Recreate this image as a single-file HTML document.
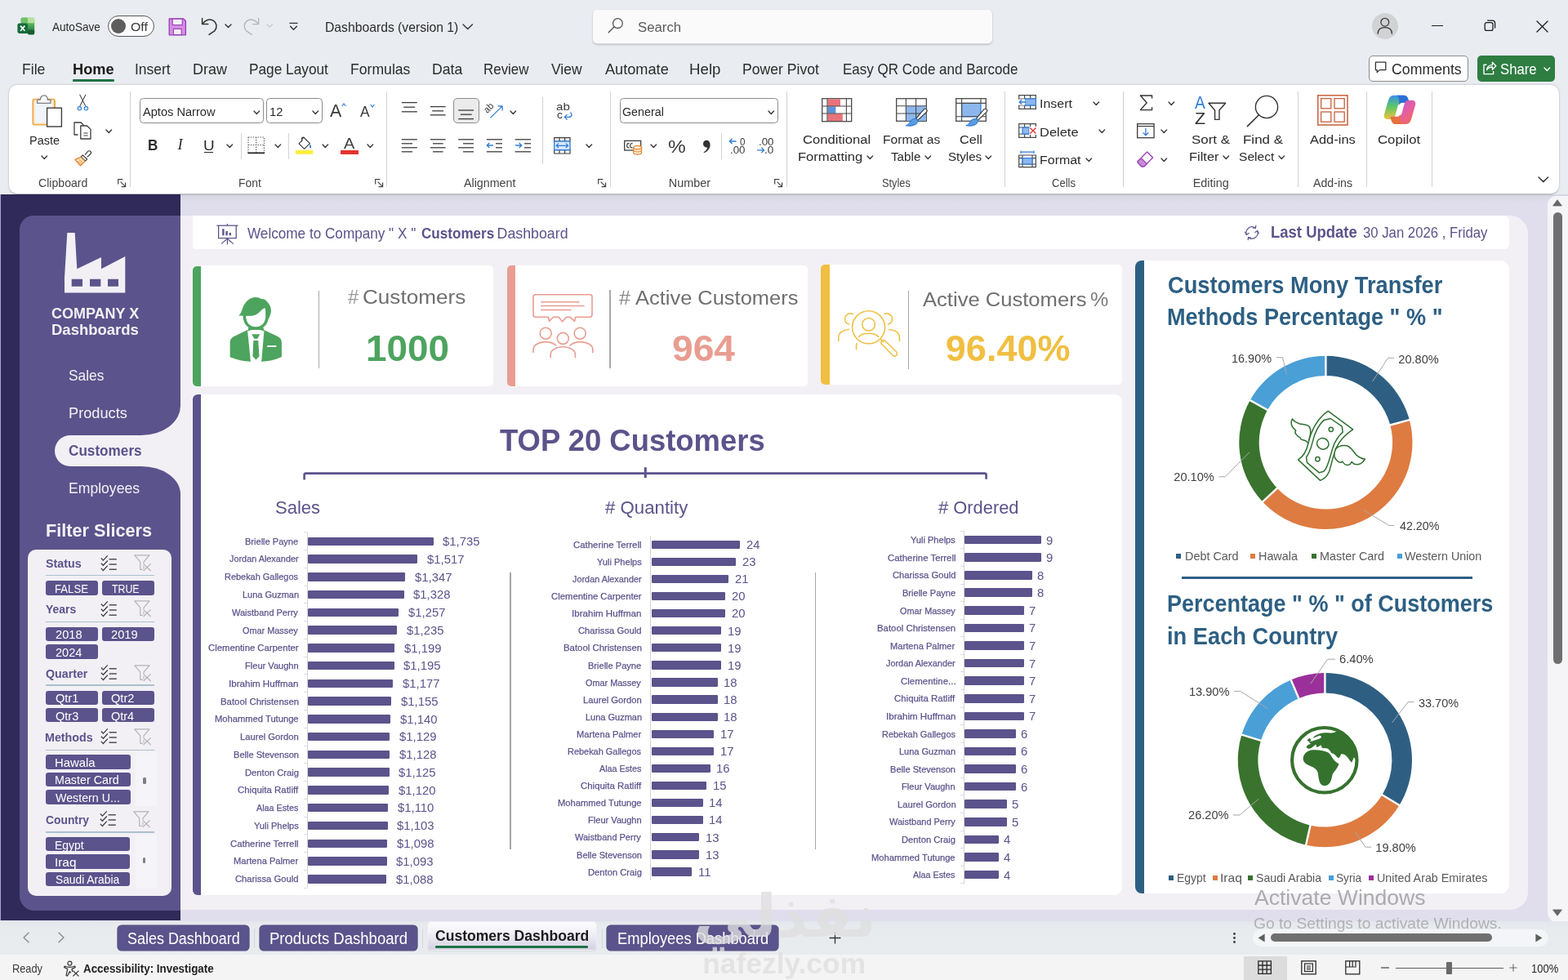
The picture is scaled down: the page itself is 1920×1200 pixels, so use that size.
<!DOCTYPE html>
<html lang="en">
<head>
<meta charset="utf-8">
<title>Dashboards (version 1) - Customers Dashboard</title>
<style>
html,body{margin:0;padding:0;overflow:hidden;}
body{width:1920px;height:1200px;overflow:hidden;background:#e9ecf1;font-family:"Liberation Sans",sans-serif;position:relative;color:#222;}
#app{will-change:transform;position:absolute;left:0;top:0;width:1920px;height:1200px;overflow:hidden;}
#app div,#app span,#app svg,#app h1,#app h2,#app h3,#app p,#app b,#app a,#app nav,#app header,#app footer,#app section,#app aside,#app main,#app button,#app ul,#app li{position:absolute;margin:0;padding:0;box-sizing:border-box;}
#app svg{overflow:visible;display:block;}
.g{left:0;top:0;width:0;height:0;}
.t{white-space:nowrap;line-height:1;font-weight:400;}
</style>
</head>
<body>
<div id="app">
<main class="g" aria-label="worksheet">
<div style="left:0px;top:238px;width:1920px;height:890px;background:#e0deec;background:linear-gradient(#d6d5e2 0,#e0deec 10px,#e0deec 100%);"></div>
<div style="left:0px;top:238px;width:220.5px;height:889px;background:#2f2a59;"></div>
<div style="left:0px;top:238px;width:1px;height:889px;background:#a9a6cf;"></div>
<div style="left:200px;top:264px;width:1671px;height:850px;background:#f2f0f5;border-radius:0 22px 22px 0;"></div>
<aside class="g" aria-label="navigation">
<div style="left:150px;top:480px;width:80px;height:140px;background:#f2f0f5;"></div>
<div style="left:24px;top:264px;width:196.5px;height:269.3px;background:#5b538b;border-radius:17px 0 48px 0 / 17px 0 36px 0;"></div>
<div style="left:24px;top:530px;width:60px;height:44px;background:#5b538b;"></div>
<div style="left:24px;top:571px;width:196.5px;height:544px;background:#5b538b;border-radius:0 48px 0 18px / 0 34px 0 18px;"></div>
<div style="left:67px;top:533.3px;width:160px;height:37.7px;background:#f2f0f5;border-radius:19px 0 0 19px;"></div>
</aside>
</main>
<nav class="g" aria-label="dashboards">
<svg style="left:79px;top:285px;" width="75" height="74" viewBox="0 0 75 74"><path d="M3.3 0 H12.7 L15.3 44.3 L45 30 V44.3 L74.3 29 V73.4 H0 V55 Z" fill="#f2f0f5"/><path d="M8.7 56.7 h13.3 v9 h-13.3z M31 56.7 h13.3 v9 h-13.3z M53 56.7 h13 v9 h-13z" fill="#5b538b"/></svg>
<span class="t" style="top:375px;font-size:18.6px;color:#f2f0f5;font-weight:700;left:62.98px;transform:scaleX(0.9670);transform-origin:0 50%;">COMPANY X</span>
<span class="t" style="top:395px;font-size:18.6px;color:#f2f0f5;font-weight:700;left:62.8px;transform:scaleX(0.9947);transform-origin:0 50%;">Dashboards</span>
<span class="t" style="top:451px;font-size:18.4px;color:#f2f0f5;left:84.22px;transform:scaleX(0.9432);transform-origin:0 50%;">Sales</span>
<span class="t" style="top:497px;font-size:18.4px;color:#f2f0f5;left:83.54px;transform:scaleX(0.9890);transform-origin:0 50%;">Products</span>
<span class="t" style="top:543px;font-size:18.4px;color:#5b538b;font-weight:700;left:84.31px;transform:scaleX(0.9327);transform-origin:0 50%;">Customers</span>
<span class="t" style="top:589px;font-size:18.4px;color:#f2f0f5;left:83.59px;transform:scaleX(0.9564);transform-origin:0 50%;">Employees</span>
</nav>
<section class="g" aria-label="filter slicers">
<h2 class="t" style="top:639px;font-size:22.2px;color:#f2f0f5;font-weight:700;left:56.29px;transform:scaleX(0.9758);transform-origin:0 50%;">Filter Slicers</h2>
<div style="left:34px;top:672.7px;width:176px;height:424.6px;background:#f2f0f5;border-radius:10px;"></div>
<span class="t" style="top:683px;font-size:14.6px;color:#5b538b;font-weight:700;left:55.87px;transform:scaleX(0.9798);transform-origin:0 50%;">Status</span>
<svg style="left:123px;top:679.6px;" width="20.4" height="18.8" viewBox="0 0 20.4 18.8"><path d="M0.8 3.5 l2.6 2.6 l5.4 -5.8" fill="none" stroke="#3d3d3d" stroke-width="1.25"/><path d="M10.6 4.8 h9.2" stroke="#3d3d3d" stroke-width="1.35"/><path d="M0.8 9.7 l2.6 2.6 l5.4 -5.8" fill="none" stroke="#3d3d3d" stroke-width="1.25"/><path d="M10.6 11 h9.2" stroke="#3d3d3d" stroke-width="1.35"/><path d="M0.8 15.9 l2.6 2.6 l5.4 -5.8" fill="none" stroke="#3d3d3d" stroke-width="1.25"/><path d="M10.6 17.2 h9.2" stroke="#3d3d3d" stroke-width="1.35"/></svg>
<svg style="left:164px;top:679px;" width="21.6" height="20.8" viewBox="0 0 21.6 20.8"><path d="M0.8 0.9 h18.2 l-6.9 8 v9.4 h-4.4 v-9.4 z" fill="none" stroke="#b4b4b4" stroke-width="1.2" stroke-linejoin="round"/><path d="M11.6 11.4 l9 8.6 M20.6 11.4 l-9 8.6" stroke="#f2f0f5" stroke-width="3.2"/><path d="M11.6 11.4 l9 8.6 M20.6 11.4 l-9 8.6" stroke="#b4b4b4" stroke-width="1.2"/></svg>
<div style="left:56px;top:703.8px;width:133.4px;height:1.7px;background:#abc0ce;"></div>
<div style="left:56.2px;top:711.3px;width:64.2px;height:17.4px;background:#5b538b;border-radius:3.2px;"></div>
<span class="t" style="top:713px;font-size:15px;color:#fff;left:67.25px;transform:scaleX(0.8785);transform-origin:0 50%;">FALSE</span>
<div style="left:125px;top:711.3px;width:64.2px;height:17.4px;background:#5b538b;border-radius:3.2px;"></div>
<span class="t" style="top:713px;font-size:15px;color:#fff;left:136.85px;transform:scaleX(0.8221);transform-origin:0 50%;">TRUE</span>
<span class="t" style="top:739px;font-size:14.6px;color:#5b538b;font-weight:700;left:56.02px;transform:scaleX(0.9552);transform-origin:0 50%;">Years</span>
<svg style="left:123px;top:735.9px;" width="20.4" height="18.8" viewBox="0 0 20.4 18.8"><path d="M0.8 3.5 l2.6 2.6 l5.4 -5.8" fill="none" stroke="#3d3d3d" stroke-width="1.25"/><path d="M10.6 4.8 h9.2" stroke="#3d3d3d" stroke-width="1.35"/><path d="M0.8 9.7 l2.6 2.6 l5.4 -5.8" fill="none" stroke="#3d3d3d" stroke-width="1.25"/><path d="M10.6 11 h9.2" stroke="#3d3d3d" stroke-width="1.35"/><path d="M0.8 15.9 l2.6 2.6 l5.4 -5.8" fill="none" stroke="#3d3d3d" stroke-width="1.25"/><path d="M10.6 17.2 h9.2" stroke="#3d3d3d" stroke-width="1.35"/></svg>
<svg style="left:164px;top:735.3px;" width="21.6" height="20.8" viewBox="0 0 21.6 20.8"><path d="M0.8 0.9 h18.2 l-6.9 8 v9.4 h-4.4 v-9.4 z" fill="none" stroke="#b4b4b4" stroke-width="1.2" stroke-linejoin="round"/><path d="M11.6 11.4 l9 8.6 M20.6 11.4 l-9 8.6" stroke="#f2f0f5" stroke-width="3.2"/><path d="M11.6 11.4 l9 8.6 M20.6 11.4 l-9 8.6" stroke="#b4b4b4" stroke-width="1.2"/></svg>
<div style="left:56px;top:760.7px;width:133.4px;height:1.7px;background:#abc0ce;"></div>
<div style="left:56.2px;top:767.6px;width:64.2px;height:17.4px;background:#5b538b;border-radius:3.2px;"></div>
<span class="t" style="top:769px;font-size:15px;color:#fff;left:67.57px;transform:scaleX(0.9774);transform-origin:0 50%;">2018</span>
<div style="left:125px;top:767.6px;width:64.2px;height:17.4px;background:#5b538b;border-radius:3.2px;"></div>
<span class="t" style="top:769px;font-size:15px;color:#fff;left:136.37px;transform:scaleX(0.9797);transform-origin:0 50%;">2019</span>
<div style="left:56.2px;top:789.2px;width:64.2px;height:17.4px;background:#5b538b;border-radius:3.2px;"></div>
<span class="t" style="top:791px;font-size:15px;color:#fff;left:67.57px;transform:scaleX(0.9728);transform-origin:0 50%;">2024</span>
<span class="t" style="top:818px;font-size:14.6px;color:#5b538b;font-weight:700;left:55.73px;transform:scaleX(0.9735);transform-origin:0 50%;">Quarter</span>
<svg style="left:123px;top:814.2px;" width="20.4" height="18.8" viewBox="0 0 20.4 18.8"><path d="M0.8 3.5 l2.6 2.6 l5.4 -5.8" fill="none" stroke="#3d3d3d" stroke-width="1.25"/><path d="M10.6 4.8 h9.2" stroke="#3d3d3d" stroke-width="1.35"/><path d="M0.8 9.7 l2.6 2.6 l5.4 -5.8" fill="none" stroke="#3d3d3d" stroke-width="1.25"/><path d="M10.6 11 h9.2" stroke="#3d3d3d" stroke-width="1.35"/><path d="M0.8 15.9 l2.6 2.6 l5.4 -5.8" fill="none" stroke="#3d3d3d" stroke-width="1.25"/><path d="M10.6 17.2 h9.2" stroke="#3d3d3d" stroke-width="1.35"/></svg>
<svg style="left:164px;top:813.6px;" width="21.6" height="20.8" viewBox="0 0 21.6 20.8"><path d="M0.8 0.9 h18.2 l-6.9 8 v9.4 h-4.4 v-9.4 z" fill="none" stroke="#b4b4b4" stroke-width="1.2" stroke-linejoin="round"/><path d="M11.6 11.4 l9 8.6 M20.6 11.4 l-9 8.6" stroke="#f2f0f5" stroke-width="3.2"/><path d="M11.6 11.4 l9 8.6 M20.6 11.4 l-9 8.6" stroke="#b4b4b4" stroke-width="1.2"/></svg>
<div style="left:56px;top:838.4px;width:133.4px;height:1.7px;background:#abc0ce;"></div>
<div style="left:56.2px;top:845.9px;width:64.2px;height:17.4px;background:#5b538b;border-radius:3.2px;"></div>
<span class="t" style="top:847px;font-size:15px;color:#fff;left:67.65px;transform:scaleX(0.9704);transform-origin:0 50%;">Qtr1</span>
<div style="left:125px;top:845.9px;width:64.2px;height:17.4px;background:#5b538b;border-radius:3.2px;"></div>
<span class="t" style="top:847px;font-size:15px;color:#fff;left:136.44px;transform:scaleX(0.9730);transform-origin:0 50%;">Qtr2</span>
<div style="left:56.2px;top:867.1px;width:64.2px;height:17.4px;background:#5b538b;border-radius:3.2px;"></div>
<span class="t" style="top:869px;font-size:15px;color:#fff;left:67.65px;transform:scaleX(0.9677);transform-origin:0 50%;">Qtr3</span>
<div style="left:125px;top:867.1px;width:64.2px;height:17.4px;background:#5b538b;border-radius:3.2px;"></div>
<span class="t" style="top:869px;font-size:15px;color:#fff;left:136.45px;transform:scaleX(0.9626);transform-origin:0 50%;">Qtr4</span>
<span class="t" style="top:896px;font-size:14.6px;color:#5b538b;font-weight:700;left:55.37px;transform:scaleX(0.9782);transform-origin:0 50%;">Methods</span>
<svg style="left:123px;top:892.3px;" width="20.4" height="18.8" viewBox="0 0 20.4 18.8"><path d="M0.8 3.5 l2.6 2.6 l5.4 -5.8" fill="none" stroke="#3d3d3d" stroke-width="1.25"/><path d="M10.6 4.8 h9.2" stroke="#3d3d3d" stroke-width="1.35"/><path d="M0.8 9.7 l2.6 2.6 l5.4 -5.8" fill="none" stroke="#3d3d3d" stroke-width="1.25"/><path d="M10.6 11 h9.2" stroke="#3d3d3d" stroke-width="1.35"/><path d="M0.8 15.9 l2.6 2.6 l5.4 -5.8" fill="none" stroke="#3d3d3d" stroke-width="1.25"/><path d="M10.6 17.2 h9.2" stroke="#3d3d3d" stroke-width="1.35"/></svg>
<svg style="left:164px;top:891.7px;" width="21.6" height="20.8" viewBox="0 0 21.6 20.8"><path d="M0.8 0.9 h18.2 l-6.9 8 v9.4 h-4.4 v-9.4 z" fill="none" stroke="#b4b4b4" stroke-width="1.2" stroke-linejoin="round"/><path d="M11.6 11.4 l9 8.6 M20.6 11.4 l-9 8.6" stroke="#f2f0f5" stroke-width="3.2"/><path d="M11.6 11.4 l9 8.6 M20.6 11.4 l-9 8.6" stroke="#b4b4b4" stroke-width="1.2"/></svg>
<div style="left:56px;top:917.7px;width:133.4px;height:1.7px;background:#abc0ce;"></div>
<div style="left:56.2px;top:924.4px;width:103.8px;height:17.4px;background:#5b538b;border-radius:3.2px;"></div>
<span class="t" style="top:926px;font-size:15px;color:#fff;left:67.11px;transform:scaleX(0.9913);transform-origin:0 50%;">Hawala</span>
<div style="left:56.2px;top:945.9px;width:103.8px;height:17.4px;background:#5b538b;border-radius:3.2px;"></div>
<span class="t" style="top:947px;font-size:15px;color:#fff;left:67.16px;transform:scaleX(0.9524);transform-origin:0 50%;">Master Card</span>
<div style="left:56.2px;top:967.3px;width:103.8px;height:17.4px;background:#5b538b;border-radius:3.2px;"></div>
<span class="t" style="top:969px;font-size:15px;color:#fff;left:68.23px;transform:scaleX(0.9498);transform-origin:0 50%;">Western U...</span>
<span class="t" style="top:997px;font-size:14.6px;color:#5b538b;font-weight:700;left:55.75px;transform:scaleX(0.9482);transform-origin:0 50%;">Country</span>
<svg style="left:122.2px;top:993.4px;" width="20.4" height="18.8" viewBox="0 0 20.4 18.8"><path d="M0.8 3.5 l2.6 2.6 l5.4 -5.8" fill="none" stroke="#3d3d3d" stroke-width="1.25"/><path d="M10.6 4.8 h9.2" stroke="#3d3d3d" stroke-width="1.35"/><path d="M0.8 9.7 l2.6 2.6 l5.4 -5.8" fill="none" stroke="#3d3d3d" stroke-width="1.25"/><path d="M10.6 11 h9.2" stroke="#3d3d3d" stroke-width="1.35"/><path d="M0.8 15.9 l2.6 2.6 l5.4 -5.8" fill="none" stroke="#3d3d3d" stroke-width="1.25"/><path d="M10.6 17.2 h9.2" stroke="#3d3d3d" stroke-width="1.35"/></svg>
<svg style="left:163.2px;top:992.8px;" width="21.6" height="20.8" viewBox="0 0 21.6 20.8"><path d="M0.8 0.9 h18.2 l-6.9 8 v9.4 h-4.4 v-9.4 z" fill="none" stroke="#b4b4b4" stroke-width="1.2" stroke-linejoin="round"/><path d="M11.6 11.4 l9 8.6 M20.6 11.4 l-9 8.6" stroke="#f2f0f5" stroke-width="3.2"/><path d="M11.6 11.4 l9 8.6 M20.6 11.4 l-9 8.6" stroke="#b4b4b4" stroke-width="1.2"/></svg>
<div style="left:56px;top:1018px;width:133.4px;height:1.7px;background:#abc0ce;"></div>
<div style="left:56.2px;top:1025px;width:103.2px;height:17.4px;background:#5b538b;border-radius:3.2px;"></div>
<span class="t" style="top:1027px;font-size:15px;color:#fff;left:67.19px;transform:scaleX(0.9285);transform-origin:0 50%;">Egypt</span>
<div style="left:56.2px;top:1046.3px;width:103.2px;height:17.4px;background:#5b538b;border-radius:3.2px;"></div>
<span class="t" style="top:1048px;font-size:15px;color:#fff;left:66.92px;transform:scaleX(1.0224);transform-origin:0 50%;">Iraq</span>
<div style="left:56.2px;top:1067.6px;width:103.2px;height:17.4px;background:#5b538b;border-radius:3.2px;"></div>
<span class="t" style="top:1069px;font-size:15px;color:#fff;left:67.68px;transform:scaleX(0.9185);transform-origin:0 50%;">Saudi Arabia</span>
<div style="left:165.6px;top:921px;width:26px;height:66px;background:#f5f4f8;"></div>
<div style="left:165.6px;top:1022px;width:26px;height:66px;background:#f5f4f8;"></div>
<div style="left:175.4px;top:951.9px;width:3.8px;height:8.4px;background:#7f7f7f;border-radius:1.5px;"></div>
<div style="left:174.6px;top:1049.8px;width:3.8px;height:7.4px;background:#7f7f7f;border-radius:1.5px;"></div>
</section>
<header class="g" aria-label="dashboard header">
<div style="left:235.8px;top:264px;width:1612px;height:40.5px;background:#fff;border-radius:2px 6px 6px 3px;"></div>
<svg style="left:265px;top:273.5px;" width="27" height="26.5" viewBox="0 0 27 26.5"><path d="M0.3 2.2 H26.5" stroke="#5b538b" stroke-width="1.3" fill="none"/><path d="M13.4 0 V2.2 M2.6 2.4 V17.6 H24.2 V2.4" stroke="#5b538b" stroke-width="1.3" fill="none"/><path d="M7.2 6.2 h2.4 v8 h-2.4z M11.4 9 h2.4 v5.2 h-2.4z M15.6 11 h2.4 v3.2 h-2.4z" fill="#5b538b"/><path d="M13.4 17.6 V25.4 M13.4 18.2 L6 24.6 M13.4 18.2 L20.8 24.6" stroke="#5b538b" stroke-width="1.2" fill="none"/></svg>
<span class="t" style="top:278px;font-size:17.8px;color:#5b538b;left:302.91px;transform:scaleX(0.9642);transform-origin:0 50%;">Welcome to Company " X "</span>
<span class="t" style="top:278px;font-size:17.8px;color:#5b538b;font-weight:700;left:516.32px;transform:scaleX(0.9609);transform-origin:0 50%;">Customers</span>
<span class="t" style="top:278px;font-size:17.8px;color:#5b538b;left:608.58px;">Dashboard</span>
<svg style="left:1523px;top:274.5px;" width="20" height="20" viewBox="0 0 20 20"><path d="M3.3 12.2 A7.2 7.2 0 0 1 14.2 4" fill="none" stroke="#5b538b" stroke-width="1.2"/><path d="M16.7 7.8 A7.2 7.2 0 0 1 5.8 16" fill="none" stroke="#5b538b" stroke-width="1.2"/><path d="M14.9 0.8 L14.4 4.3 L10.9 3.8 M5.1 19.2 L5.6 15.7 L9.1 16.2" fill="none" stroke="#5b538b" stroke-width="1.2"/><path d="M1.3 8.8 L3.3 12.4 L6.6 10.2 M18.7 11.2 L16.7 7.6 L13.4 9.8" fill="none" stroke="#5b538b" stroke-width="1.1"/></svg>
<span class="t" style="top:275px;font-size:19.6px;color:#5b538b;font-weight:700;left:1555.6px;transform:scaleX(0.9432);transform-origin:0 50%;">Last Update</span>
<span class="t" style="top:277px;font-size:17.8px;color:#5b538b;left:1668.63px;transform:scaleX(0.9404);transform-origin:0 50%;">30 Jan 2026 , Friday</span>
</header>
<section class="g" aria-label="kpi cards">
<div style="left:236px;top:325.4px;width:368.3px;height:147.8px;background:#fff;border-radius:5px;"></div>
<div style="left:235.8px;top:325.6px;width:10px;height:147.2px;background:#4da45e;border-radius:5px 0 0 5px;"></div>
<svg style="left:260px;top:350px;" width="120" height="110" viewBox="0 0 1309 1200"><path d="M470 588 L300 672 C255 694 236 716 236 760 V952 C330 992 420 1008 512 1012 L655 1012 C748 1008 838 992 926 950 V760 C926 716 906 694 862 672 L690 588 Z" fill="#4da45e"/><path d="M470 600 L512 1014 H656 L692 600 L640 580 H520 Z" fill="#fff"/><path d="M526 645 H636 L602 706 H560 Z" fill="#4da45e"/><path d="M549 730 H613 L627 940 L583 986 L539 940 Z" fill="#4da45e"/><path d="M742 806 H846" stroke="#fff" stroke-width="22" stroke-linecap="round"/><path d="M410 400 C410 520 490 584 580 584 C670 584 752 520 752 400 L752 330 L410 330 Z" fill="#4da45e"/><path d="M478 560 H686 V612 H478 Z" fill="#4da45e"/><path d="M524 590 H640 L690 606 L640 626 H524 L470 606 Z" fill="#fff"/><path d="M448 398 C448 500 510 548 580 548 C650 548 713 500 713 398 C713 350 712 320 706 296 C670 300 640 340 600 372 C570 396 520 402 448 398 Z" fill="#fff"/><path d="M350 398 C380 380 388 340 404 300 C436 210 500 152 580 152 C610 152 634 160 652 178 C676 170 706 184 728 206 C770 248 790 300 784 346 C780 380 764 420 750 440 L714 440 C716 400 716 340 706 296 C670 300 644 338 604 370 C570 398 520 404 448 400 Z" fill="#4da45e"/></svg>
<div style="left:389.6px;top:356.2px;width:1.8px;height:95px;background:#a9a9a9;"></div>
<span class="t" style="top:352px;font-size:24px;color:#9a9a9a;left:426.18px;transform:scaleX(0.9939);transform-origin:0 50%;">#</span>
<span class="t" style="top:352px;font-size:24px;color:#6f6f6f;left:444.29px;transform:scaleX(1.0877);transform-origin:0 50%;">Customers</span>
<span class="t" style="top:404px;font-size:45px;color:#4da45e;font-weight:700;left:448.05px;transform:scaleX(1.0196);transform-origin:0 50%;">1000</span>
<div style="left:621px;top:325.2px;width:367.6px;height:147.8px;background:#fff;border-radius:5px;"></div>
<div style="left:620.8px;top:325.4px;width:10px;height:147.6px;background:#e99d91;border-radius:5px 0 0 5px;"></div>
<svg style="left:652px;top:360px;" width="75.5" height="79" viewBox="0 0 75.5 79"><g fill="none" stroke="#e99d91" stroke-width="1.6" stroke-linejoin="round" stroke-linecap="round"><path d="M3.6 0.7 H70.4 A2.6 2.6 0 0 1 73 3.3 V25.6 A2.6 2.6 0 0 1 70.4 28.2 H52.6 L51.6 33.4 L46 28.2 H41.6 L36.6 33.8 L32 28.2 H25.6 L20.4 33.4 L19.6 28.2 H3.6 A2.6 2.6 0 0 1 1 25.6 V3.3 A2.6 2.6 0 0 1 3.6 0.7 Z"/><path d="M10.6 9.7 H57 M10.6 14.5 H63 M10.6 19.5 H47"/><circle cx="16.2" cy="48.2" r="7"/><circle cx="58.2" cy="48.2" r="7"/><circle cx="37.3" cy="54.4" r="7"/><path d="M1 71.6 V68 C1 62.6 8 58.6 15.6 58.6 C21 58.6 25.6 60.2 28.8 62.8"/><path d="M73.8 71.6 V68 C73.8 62.6 66.8 58.6 59.2 58.6 C53.8 58.6 49.2 60.2 46 62.8"/><path d="M22.2 77.8 V74.2 C22.2 68.6 29 64.8 37.3 64.8 C45.6 64.8 52.4 68.6 52.4 74.2 V77.8"/></g></svg>
<div style="left:746.2px;top:355.2px;width:1.8px;height:96px;background:#a9a9a9;"></div>
<span class="t" style="top:353px;font-size:24.6px;color:#8a8a8a;left:758.18px;transform:scaleX(1.0144);transform-origin:0 50%;">#</span>
<span class="t" style="top:353px;font-size:24.6px;color:#6f6f6f;left:777.5px;transform:scaleX(1.0345);transform-origin:0 50%;">Active Customers</span>
<span class="t" style="top:404px;font-size:45px;color:#e99d91;font-weight:700;left:822.98px;transform:scaleX(1.0256);transform-origin:0 50%;">964</span>
<div style="left:1005.4px;top:324.2px;width:368.4px;height:147px;background:#fff;border-radius:5px;"></div>
<div style="left:1005.2px;top:324.2px;width:10.8px;height:146.8px;background:#f0bf42;border-radius:5px 0 0 5px;"></div>
<svg style="left:1026px;top:379.6px;" width="76.5" height="57" viewBox="0 0 76.5 57"><g fill="none" stroke="#f0bf42" stroke-width="1.55" stroke-linecap="round" stroke-linejoin="round"><circle cx="37.6" cy="20.8" r="20"/><circle cx="37.6" cy="17.2" r="7.8"/><path d="M25.4 32.4 C27.6 29.6 32 28.2 37.6 28.2 C43.2 28.2 47.6 29.6 49.8 32.4"/><path d="M52.6 35.4 L55.4 38.2 M57.2 36.8 L71.6 50.8 A3.1 3.1 0 0 1 67.2 55.2 L53.2 40.8 A3 3 0 0 1 57.2 36.8 Z"/><path d="M18.2 4.2 C14 2.6 8.6 5.4 8.6 10.4 C8.6 13.6 10.8 16.2 13.6 17"/><path d="M57 4.2 C61.2 2.6 66.6 5.4 66.6 10.4 C66.6 13.6 64.4 16.2 61.6 17"/><path d="M0.8 37.4 V32.6 C0.8 27.6 6 23.8 13.4 23.4"/><path d="M75.4 37.4 V32.6 C75.4 27.6 70.2 23.8 62.8 23.4"/><path d="M23 40.6 C22.4 42.6 22.4 45 22.6 47.8"/></g></svg>
<div style="left:1111.6px;top:356px;width:1.8px;height:96px;background:#a9a9a9;"></div>
<span class="t" style="top:355px;font-size:24.4px;color:#6f6f6f;left:1130.2px;transform:scaleX(1.0488);transform-origin:0 50%;">Active Customers</span>
<span class="t" style="top:355px;font-size:24.4px;color:#7a7a7a;left:1334.72px;transform:scaleX(1.0296);transform-origin:0 50%;">%</span>
<span class="t" style="top:404px;font-size:45px;color:#f0bf42;font-weight:700;left:1157.83px;">96.40%</span>
</section>
<section class="g" aria-label="top 20 customers">
<div style="left:236px;top:483.4px;width:1138px;height:613px;background:#fff;border-radius:6px 9px 9px 6px;"></div>
<div style="left:235.6px;top:483px;width:10.2px;height:613.4px;background:#5b538b;border-radius:6px 0 0 6px;"></div>
<h1 class="t" style="top:521px;font-size:37.6px;color:#5b538b;font-weight:700;left:612.14px;transform:scaleX(0.9696);transform-origin:0 50%;">TOP 20 Customers</h1>
<svg style="left:370px;top:570px;" width="842" height="20" viewBox="0 0 842 20"><path d="M2.6 17.6 V11.4 Q2.6 9.6 4.4 9.6 H835.6 Q837.6 9.6 837.6 11.4 V16.8" fill="none" stroke="#5b538b" stroke-width="2.6"/><path d="M420.3 2.2 V15.2" stroke="#5b538b" stroke-width="3"/></svg>
</section>
<section class="g" aria-label="Sales">
<h3 class="t" style="top:611px;font-size:22.4px;color:#5b538b;left:337.01px;transform:scaleX(0.9823);transform-origin:0 50%;">Sales</h3>
<div style="left:375.9px;top:651.87px;width:1px;height:435.32px;background:#d4d4d4;"></div>
<div style="left:372.4px;top:651.37px;width:4px;height:1px;background:#dcdcdc;"></div>
<div style="left:372.4px;top:673.13px;width:4px;height:1px;background:#dcdcdc;"></div>
<div style="left:372.4px;top:694.9px;width:4px;height:1px;background:#dcdcdc;"></div>
<div style="left:372.4px;top:716.66px;width:4px;height:1px;background:#dcdcdc;"></div>
<div style="left:372.4px;top:738.43px;width:4px;height:1px;background:#dcdcdc;"></div>
<div style="left:372.4px;top:760.2px;width:4px;height:1px;background:#dcdcdc;"></div>
<div style="left:372.4px;top:781.96px;width:4px;height:1px;background:#dcdcdc;"></div>
<div style="left:372.4px;top:803.73px;width:4px;height:1px;background:#dcdcdc;"></div>
<div style="left:372.4px;top:825.49px;width:4px;height:1px;background:#dcdcdc;"></div>
<div style="left:372.4px;top:847.26px;width:4px;height:1px;background:#dcdcdc;"></div>
<div style="left:372.4px;top:869.03px;width:4px;height:1px;background:#dcdcdc;"></div>
<div style="left:372.4px;top:890.79px;width:4px;height:1px;background:#dcdcdc;"></div>
<div style="left:372.4px;top:912.56px;width:4px;height:1px;background:#dcdcdc;"></div>
<div style="left:372.4px;top:934.32px;width:4px;height:1px;background:#dcdcdc;"></div>
<div style="left:372.4px;top:956.09px;width:4px;height:1px;background:#dcdcdc;"></div>
<div style="left:372.4px;top:977.86px;width:4px;height:1px;background:#dcdcdc;"></div>
<div style="left:372.4px;top:999.62px;width:4px;height:1px;background:#dcdcdc;"></div>
<div style="left:372.4px;top:1021.39px;width:4px;height:1px;background:#dcdcdc;"></div>
<div style="left:372.4px;top:1043.15px;width:4px;height:1px;background:#dcdcdc;"></div>
<div style="left:372.4px;top:1064.92px;width:4px;height:1px;background:#dcdcdc;"></div>
<div style="left:372.4px;top:1086.69px;width:4px;height:1px;background:#dcdcdc;"></div>
<div style="left:377.4px;top:657.5px;width:153.2px;height:10.5px;background:#5b538b;border-radius:1.2px;"></div>
<span class="t" style="top:658px;font-size:11.8px;color:#5b538b;left:300.37px;transform:scaleX(0.9371);transform-origin:0 50%;-webkit-text-stroke:0.25px #5b538b;">Brielle Payne</span>
<span class="t" style="top:656px;font-size:14.6px;color:#5b538b;left:542.15px;transform:scaleX(1.0171);transform-origin:0 50%;">$1,735</span>
<div style="left:377.4px;top:679.27px;width:133.95px;height:10.5px;background:#5b538b;border-radius:1.2px;"></div>
<span class="t" style="top:679px;font-size:11.8px;color:#5b538b;left:280.59px;transform:scaleX(0.9213);transform-origin:0 50%;-webkit-text-stroke:0.25px #5b538b;">Jordan Alexander</span>
<span class="t" style="top:678px;font-size:14.6px;color:#5b538b;left:522.9px;transform:scaleX(1.0171);transform-origin:0 50%;">$1,517</span>
<div style="left:377.4px;top:701.03px;width:118.94px;height:10.5px;background:#5b538b;border-radius:1.2px;"></div>
<span class="t" style="top:701px;font-size:11.8px;color:#5b538b;left:275.38px;transform:scaleX(0.9268);transform-origin:0 50%;-webkit-text-stroke:0.25px #5b538b;">Rebekah Gallegos</span>
<span class="t" style="top:700px;font-size:14.6px;color:#5b538b;left:507.89px;transform:scaleX(1.0171);transform-origin:0 50%;">$1,347</span>
<div style="left:377.4px;top:722.8px;width:117.26px;height:10.5px;background:#5b538b;border-radius:1.2px;"></div>
<span class="t" style="top:723px;font-size:11.8px;color:#5b538b;left:296.62px;transform:scaleX(0.9324);transform-origin:0 50%;-webkit-text-stroke:0.25px #5b538b;">Luna Guzman</span>
<span class="t" style="top:721px;font-size:14.6px;color:#5b538b;left:506.21px;transform:scaleX(1.0171);transform-origin:0 50%;">$1,328</span>
<div style="left:377.4px;top:744.56px;width:110.99px;height:10.5px;background:#5b538b;border-radius:1.2px;"></div>
<span class="t" style="top:745px;font-size:11.8px;color:#5b538b;left:284.2px;transform:scaleX(0.9311);transform-origin:0 50%;-webkit-text-stroke:0.25px #5b538b;">Waistband Perry</span>
<span class="t" style="top:743px;font-size:14.6px;color:#5b538b;left:499.94px;transform:scaleX(1.0171);transform-origin:0 50%;">$1,257</span>
<div style="left:377.4px;top:766.33px;width:109.05px;height:10.5px;background:#5b538b;border-radius:1.2px;"></div>
<span class="t" style="top:767px;font-size:11.8px;color:#5b538b;left:297.31px;transform:scaleX(0.9215);transform-origin:0 50%;-webkit-text-stroke:0.25px #5b538b;">Omar Massey</span>
<span class="t" style="top:765px;font-size:14.6px;color:#5b538b;left:498px;transform:scaleX(1.0171);transform-origin:0 50%;">$1,235</span>
<div style="left:377.4px;top:788.1px;width:105.87px;height:10.5px;background:#5b538b;border-radius:1.2px;"></div>
<span class="t" style="top:788px;font-size:11.8px;color:#5b538b;left:254.53px;transform:scaleX(0.9587);transform-origin:0 50%;-webkit-text-stroke:0.25px #5b538b;">Clementine Carpenter</span>
<span class="t" style="top:787px;font-size:14.6px;color:#5b538b;left:494.82px;transform:scaleX(1.0171);transform-origin:0 50%;">$1,199</span>
<div style="left:377.4px;top:809.86px;width:105.52px;height:10.5px;background:#5b538b;border-radius:1.2px;"></div>
<span class="t" style="top:810px;font-size:11.8px;color:#5b538b;left:300.01px;transform:scaleX(0.9390);transform-origin:0 50%;-webkit-text-stroke:0.25px #5b538b;">Fleur Vaughn</span>
<span class="t" style="top:808px;font-size:14.6px;color:#5b538b;left:494.47px;transform:scaleX(1.0171);transform-origin:0 50%;">$1,195</span>
<div style="left:377.4px;top:831.63px;width:103.93px;height:10.5px;background:#5b538b;border-radius:1.2px;"></div>
<span class="t" style="top:832px;font-size:11.8px;color:#5b538b;left:280.26px;transform:scaleX(0.9824);transform-origin:0 50%;-webkit-text-stroke:0.25px #5b538b;">Ibrahim Huffman</span>
<span class="t" style="top:830px;font-size:14.6px;color:#5b538b;left:492.88px;transform:scaleX(1.0171);transform-origin:0 50%;">$1,177</span>
<div style="left:377.4px;top:853.39px;width:101.99px;height:10.5px;background:#5b538b;border-radius:1.2px;"></div>
<span class="t" style="top:854px;font-size:11.8px;color:#5b538b;left:269.59px;transform:scaleX(0.9643);transform-origin:0 50%;-webkit-text-stroke:0.25px #5b538b;">Batool Christensen</span>
<span class="t" style="top:852px;font-size:14.6px;color:#5b538b;left:490.94px;transform:scaleX(1.0171);transform-origin:0 50%;">$1,155</span>
<div style="left:377.4px;top:875.16px;width:100.66px;height:10.5px;background:#5b538b;border-radius:1.2px;"></div>
<span class="t" style="top:875px;font-size:11.8px;color:#5b538b;left:262.9px;transform:scaleX(0.9482);transform-origin:0 50%;-webkit-text-stroke:0.25px #5b538b;">Mohammed Tutunge</span>
<span class="t" style="top:874px;font-size:14.6px;color:#5b538b;left:489.61px;transform:scaleX(1.0171);transform-origin:0 50%;">$1,140</span>
<div style="left:377.4px;top:896.93px;width:99.69px;height:10.5px;background:#5b538b;border-radius:1.2px;"></div>
<span class="t" style="top:897px;font-size:11.8px;color:#5b538b;left:294.1px;transform:scaleX(0.9499);transform-origin:0 50%;-webkit-text-stroke:0.25px #5b538b;">Laurel Gordon</span>
<span class="t" style="top:895px;font-size:14.6px;color:#5b538b;left:488.64px;transform:scaleX(1.0171);transform-origin:0 50%;">$1,129</span>
<div style="left:377.4px;top:918.69px;width:99.6px;height:10.5px;background:#5b538b;border-radius:1.2px;"></div>
<span class="t" style="top:919px;font-size:11.8px;color:#5b538b;left:285.71px;transform:scaleX(0.9384);transform-origin:0 50%;-webkit-text-stroke:0.25px #5b538b;">Belle Stevenson</span>
<span class="t" style="top:917px;font-size:14.6px;color:#5b538b;left:488.55px;transform:scaleX(1.0171);transform-origin:0 50%;">$1,128</span>
<div style="left:377.4px;top:940.46px;width:99.34px;height:10.5px;background:#5b538b;border-radius:1.2px;"></div>
<span class="t" style="top:941px;font-size:11.8px;color:#5b538b;left:299.7px;transform:scaleX(0.9500);transform-origin:0 50%;-webkit-text-stroke:0.25px #5b538b;">Denton Craig</span>
<span class="t" style="top:939px;font-size:14.6px;color:#5b538b;left:488.29px;transform:scaleX(1.0171);transform-origin:0 50%;">$1,125</span>
<div style="left:377.4px;top:962.22px;width:98.9px;height:10.5px;background:#5b538b;border-radius:1.2px;"></div>
<span class="t" style="top:962px;font-size:11.8px;color:#5b538b;left:290.93px;transform:scaleX(0.9680);transform-origin:0 50%;-webkit-text-stroke:0.25px #5b538b;">Chiquita Ratliff</span>
<span class="t" style="top:961px;font-size:14.6px;color:#5b538b;left:487.85px;transform:scaleX(1.0171);transform-origin:0 50%;">$1,120</span>
<div style="left:377.4px;top:983.99px;width:98.01px;height:10.5px;background:#5b538b;border-radius:1.2px;"></div>
<span class="t" style="top:984px;font-size:11.8px;color:#5b538b;left:314px;transform:scaleX(0.9109);transform-origin:0 50%;-webkit-text-stroke:0.25px #5b538b;">Alaa Estes</span>
<span class="t" style="top:982px;font-size:14.6px;color:#5b538b;left:486.96px;transform:scaleX(1.0171);transform-origin:0 50%;">$1,110</span>
<div style="left:377.4px;top:1005.76px;width:97.39px;height:10.5px;background:#5b538b;border-radius:1.2px;"></div>
<span class="t" style="top:1006px;font-size:11.8px;color:#5b538b;left:310.52px;transform:scaleX(0.9393);transform-origin:0 50%;-webkit-text-stroke:0.25px #5b538b;">Yuli Phelps</span>
<span class="t" style="top:1004px;font-size:14.6px;color:#5b538b;left:486.35px;transform:scaleX(1.0171);transform-origin:0 50%;">$1,103</span>
<div style="left:377.4px;top:1027.52px;width:96.95px;height:10.5px;background:#5b538b;border-radius:1.2px;"></div>
<span class="t" style="top:1028px;font-size:11.8px;color:#5b538b;left:282.23px;transform:scaleX(0.9675);transform-origin:0 50%;-webkit-text-stroke:0.25px #5b538b;">Catherine Terrell</span>
<span class="t" style="top:1026px;font-size:14.6px;color:#5b538b;left:485.9px;transform:scaleX(1.0171);transform-origin:0 50%;">$1,098</span>
<div style="left:377.4px;top:1049.29px;width:96.51px;height:10.5px;background:#5b538b;border-radius:1.2px;"></div>
<span class="t" style="top:1049px;font-size:11.8px;color:#5b538b;left:286.01px;transform:scaleX(0.9435);transform-origin:0 50%;-webkit-text-stroke:0.25px #5b538b;">Martena Palmer</span>
<span class="t" style="top:1048px;font-size:14.6px;color:#5b538b;left:485.46px;transform:scaleX(1.0171);transform-origin:0 50%;">$1,093</span>
<div style="left:377.4px;top:1071.05px;width:96.07px;height:10.5px;background:#5b538b;border-radius:1.2px;"></div>
<span class="t" style="top:1071px;font-size:11.8px;color:#5b538b;left:288.34px;transform:scaleX(0.9519);transform-origin:0 50%;-webkit-text-stroke:0.25px #5b538b;">Charissa Gould</span>
<span class="t" style="top:1070px;font-size:14.6px;color:#5b538b;left:485.02px;transform:scaleX(1.0171);transform-origin:0 50%;">$1,088</span>
</section>
<div style="left:624.4px;top:701.3px;width:1.6px;height:339px;background:#a6a6a6;"></div>
<section class="g" aria-label="Quantity">
<h3 class="t" style="top:611px;font-size:22.4px;color:#5b538b;left:741.14px;transform:scaleX(0.9923);transform-origin:0 50%;"># Quantity</h3>
<div style="left:796.1px;top:656.25px;width:1px;height:421.8px;background:#d4d4d4;"></div>
<div style="left:797.6px;top:661.65px;width:108px;height:10.3px;background:#5b538b;border-radius:1.2px;"></div>
<span class="t" style="top:662px;font-size:11.8px;color:#5b538b;left:702.23px;transform:scaleX(0.9675);transform-origin:0 50%;-webkit-text-stroke:0.25px #5b538b;">Catherine Terrell</span>
<span class="t" style="top:660px;font-size:14.6px;color:#5b538b;left:913.86px;transform:scaleX(1.0171);transform-origin:0 50%;">24</span>
<div style="left:797.6px;top:682.74px;width:103.5px;height:10.3px;background:#5b538b;border-radius:1.2px;"></div>
<span class="t" style="top:683px;font-size:11.8px;color:#5b538b;left:730.52px;transform:scaleX(0.9393);transform-origin:0 50%;-webkit-text-stroke:0.25px #5b538b;">Yuli Phelps</span>
<span class="t" style="top:681px;font-size:14.6px;color:#5b538b;left:909.36px;transform:scaleX(1.0171);transform-origin:0 50%;">23</span>
<div style="left:797.6px;top:703.83px;width:94.5px;height:10.3px;background:#5b538b;border-radius:1.2px;"></div>
<span class="t" style="top:704px;font-size:11.8px;color:#5b538b;left:700.59px;transform:scaleX(0.9213);transform-origin:0 50%;-webkit-text-stroke:0.25px #5b538b;">Jordan Alexander</span>
<span class="t" style="top:702px;font-size:14.6px;color:#5b538b;left:900.36px;transform:scaleX(1.0171);transform-origin:0 50%;">21</span>
<div style="left:797.6px;top:724.92px;width:90px;height:10.3px;background:#5b538b;border-radius:1.2px;"></div>
<span class="t" style="top:725px;font-size:11.8px;color:#5b538b;left:674.53px;transform:scaleX(0.9587);transform-origin:0 50%;-webkit-text-stroke:0.25px #5b538b;">Clementine Carpenter</span>
<span class="t" style="top:723px;font-size:14.6px;color:#5b538b;left:895.86px;transform:scaleX(1.0171);transform-origin:0 50%;">20</span>
<div style="left:797.6px;top:746.01px;width:90px;height:10.3px;background:#5b538b;border-radius:1.2px;"></div>
<span class="t" style="top:746px;font-size:11.8px;color:#5b538b;left:700.26px;transform:scaleX(0.9824);transform-origin:0 50%;-webkit-text-stroke:0.25px #5b538b;">Ibrahim Huffman</span>
<span class="t" style="top:744px;font-size:14.6px;color:#5b538b;left:895.86px;transform:scaleX(1.0171);transform-origin:0 50%;">20</span>
<div style="left:797.6px;top:767.1px;width:85.5px;height:10.3px;background:#5b538b;border-radius:1.2px;"></div>
<span class="t" style="top:767px;font-size:11.8px;color:#5b538b;left:708.34px;transform:scaleX(0.9519);transform-origin:0 50%;-webkit-text-stroke:0.25px #5b538b;">Charissa Gould</span>
<span class="t" style="top:766px;font-size:14.6px;color:#5b538b;left:890.99px;transform:scaleX(1.0171);transform-origin:0 50%;">19</span>
<div style="left:797.6px;top:788.19px;width:85.5px;height:10.3px;background:#5b538b;border-radius:1.2px;"></div>
<span class="t" style="top:788px;font-size:11.8px;color:#5b538b;left:689.59px;transform:scaleX(0.9643);transform-origin:0 50%;-webkit-text-stroke:0.25px #5b538b;">Batool Christensen</span>
<span class="t" style="top:787px;font-size:14.6px;color:#5b538b;left:890.99px;transform:scaleX(1.0171);transform-origin:0 50%;">19</span>
<div style="left:797.6px;top:809.28px;width:85.5px;height:10.3px;background:#5b538b;border-radius:1.2px;"></div>
<span class="t" style="top:810px;font-size:11.8px;color:#5b538b;left:720.37px;transform:scaleX(0.9371);transform-origin:0 50%;-webkit-text-stroke:0.25px #5b538b;">Brielle Payne</span>
<span class="t" style="top:808px;font-size:14.6px;color:#5b538b;left:890.99px;transform:scaleX(1.0171);transform-origin:0 50%;">19</span>
<div style="left:797.6px;top:830.37px;width:81px;height:10.3px;background:#5b538b;border-radius:1.2px;"></div>
<span class="t" style="top:831px;font-size:11.8px;color:#5b538b;left:717.31px;transform:scaleX(0.9215);transform-origin:0 50%;-webkit-text-stroke:0.25px #5b538b;">Omar Massey</span>
<span class="t" style="top:829px;font-size:14.6px;color:#5b538b;left:886.49px;transform:scaleX(1.0171);transform-origin:0 50%;">18</span>
<div style="left:797.6px;top:851.46px;width:81px;height:10.3px;background:#5b538b;border-radius:1.2px;"></div>
<span class="t" style="top:852px;font-size:11.8px;color:#5b538b;left:714.1px;transform:scaleX(0.9499);transform-origin:0 50%;-webkit-text-stroke:0.25px #5b538b;">Laurel Gordon</span>
<span class="t" style="top:850px;font-size:14.6px;color:#5b538b;left:886.49px;transform:scaleX(1.0171);transform-origin:0 50%;">18</span>
<div style="left:797.6px;top:872.55px;width:81px;height:10.3px;background:#5b538b;border-radius:1.2px;"></div>
<span class="t" style="top:873px;font-size:11.8px;color:#5b538b;left:716.62px;transform:scaleX(0.9324);transform-origin:0 50%;-webkit-text-stroke:0.25px #5b538b;">Luna Guzman</span>
<span class="t" style="top:871px;font-size:14.6px;color:#5b538b;left:886.49px;transform:scaleX(1.0171);transform-origin:0 50%;">18</span>
<div style="left:797.6px;top:893.64px;width:76.5px;height:10.3px;background:#5b538b;border-radius:1.2px;"></div>
<span class="t" style="top:894px;font-size:11.8px;color:#5b538b;left:706.01px;transform:scaleX(0.9435);transform-origin:0 50%;-webkit-text-stroke:0.25px #5b538b;">Martena Palmer</span>
<span class="t" style="top:892px;font-size:14.6px;color:#5b538b;left:881.99px;transform:scaleX(1.0171);transform-origin:0 50%;">17</span>
<div style="left:797.6px;top:914.73px;width:76.5px;height:10.3px;background:#5b538b;border-radius:1.2px;"></div>
<span class="t" style="top:915px;font-size:11.8px;color:#5b538b;left:695.38px;transform:scaleX(0.9268);transform-origin:0 50%;-webkit-text-stroke:0.25px #5b538b;">Rebekah Gallegos</span>
<span class="t" style="top:913px;font-size:14.6px;color:#5b538b;left:881.99px;transform:scaleX(1.0171);transform-origin:0 50%;">17</span>
<div style="left:797.6px;top:935.82px;width:72px;height:10.3px;background:#5b538b;border-radius:1.2px;"></div>
<span class="t" style="top:936px;font-size:11.8px;color:#5b538b;left:734px;transform:scaleX(0.9109);transform-origin:0 50%;-webkit-text-stroke:0.25px #5b538b;">Alaa Estes</span>
<span class="t" style="top:934px;font-size:14.6px;color:#5b538b;left:877.49px;transform:scaleX(1.0171);transform-origin:0 50%;">16</span>
<div style="left:797.6px;top:956.91px;width:67.5px;height:10.3px;background:#5b538b;border-radius:1.2px;"></div>
<span class="t" style="top:957px;font-size:11.8px;color:#5b538b;left:710.93px;transform:scaleX(0.9680);transform-origin:0 50%;-webkit-text-stroke:0.25px #5b538b;">Chiquita Ratliff</span>
<span class="t" style="top:955px;font-size:14.6px;color:#5b538b;left:872.99px;transform:scaleX(1.0171);transform-origin:0 50%;">15</span>
<div style="left:797.6px;top:978px;width:63px;height:10.3px;background:#5b538b;border-radius:1.2px;"></div>
<span class="t" style="top:978px;font-size:11.8px;color:#5b538b;left:682.9px;transform:scaleX(0.9482);transform-origin:0 50%;-webkit-text-stroke:0.25px #5b538b;">Mohammed Tutunge</span>
<span class="t" style="top:976px;font-size:14.6px;color:#5b538b;left:868.49px;transform:scaleX(1.0171);transform-origin:0 50%;">14</span>
<div style="left:797.6px;top:999.09px;width:63px;height:10.3px;background:#5b538b;border-radius:1.2px;"></div>
<span class="t" style="top:999px;font-size:11.8px;color:#5b538b;left:720.01px;transform:scaleX(0.9390);transform-origin:0 50%;-webkit-text-stroke:0.25px #5b538b;">Fleur Vaughn</span>
<span class="t" style="top:997px;font-size:14.6px;color:#5b538b;left:868.49px;transform:scaleX(1.0171);transform-origin:0 50%;">14</span>
<div style="left:797.6px;top:1020.18px;width:58.5px;height:10.3px;background:#5b538b;border-radius:1.2px;"></div>
<span class="t" style="top:1020px;font-size:11.8px;color:#5b538b;left:704.2px;transform:scaleX(0.9311);transform-origin:0 50%;-webkit-text-stroke:0.25px #5b538b;">Waistband Perry</span>
<span class="t" style="top:1019px;font-size:14.6px;color:#5b538b;left:863.99px;transform:scaleX(1.0171);transform-origin:0 50%;">13</span>
<div style="left:797.6px;top:1041.27px;width:58.5px;height:10.3px;background:#5b538b;border-radius:1.2px;"></div>
<span class="t" style="top:1042px;font-size:11.8px;color:#5b538b;left:705.71px;transform:scaleX(0.9384);transform-origin:0 50%;-webkit-text-stroke:0.25px #5b538b;">Belle Stevenson</span>
<span class="t" style="top:1040px;font-size:14.6px;color:#5b538b;left:863.99px;transform:scaleX(1.0171);transform-origin:0 50%;">13</span>
<div style="left:797.6px;top:1062.36px;width:49.5px;height:10.3px;background:#5b538b;border-radius:1.2px;"></div>
<span class="t" style="top:1063px;font-size:11.8px;color:#5b538b;left:719.7px;transform:scaleX(0.9500);transform-origin:0 50%;-webkit-text-stroke:0.25px #5b538b;">Denton Craig</span>
<span class="t" style="top:1061px;font-size:14.6px;color:#5b538b;left:854.99px;transform:scaleX(1.0171);transform-origin:0 50%;">11</span>
</section>
<div style="left:997.7px;top:701.4px;width:1.6px;height:339px;background:#a6a6a6;"></div>
<section class="g" aria-label="Ordered">
<h3 class="t" style="top:611px;font-size:22.4px;color:#5b538b;left:1148.89px;transform:scaleX(0.9775);transform-origin:0 50%;"># Ordered</h3>
<div style="left:1179.9px;top:650.26px;width:1px;height:431.6px;background:#d4d4d4;"></div>
<div style="left:1176.4px;top:649.76px;width:4px;height:1px;background:#dcdcdc;"></div>
<div style="left:1176.4px;top:671.34px;width:4px;height:1px;background:#dcdcdc;"></div>
<div style="left:1176.4px;top:692.92px;width:4px;height:1px;background:#dcdcdc;"></div>
<div style="left:1176.4px;top:714.5px;width:4px;height:1px;background:#dcdcdc;"></div>
<div style="left:1176.4px;top:736.08px;width:4px;height:1px;background:#dcdcdc;"></div>
<div style="left:1176.4px;top:757.66px;width:4px;height:1px;background:#dcdcdc;"></div>
<div style="left:1176.4px;top:779.24px;width:4px;height:1px;background:#dcdcdc;"></div>
<div style="left:1176.4px;top:800.82px;width:4px;height:1px;background:#dcdcdc;"></div>
<div style="left:1176.4px;top:822.4px;width:4px;height:1px;background:#dcdcdc;"></div>
<div style="left:1176.4px;top:843.98px;width:4px;height:1px;background:#dcdcdc;"></div>
<div style="left:1176.4px;top:865.56px;width:4px;height:1px;background:#dcdcdc;"></div>
<div style="left:1176.4px;top:887.14px;width:4px;height:1px;background:#dcdcdc;"></div>
<div style="left:1176.4px;top:908.72px;width:4px;height:1px;background:#dcdcdc;"></div>
<div style="left:1176.4px;top:930.3px;width:4px;height:1px;background:#dcdcdc;"></div>
<div style="left:1176.4px;top:951.88px;width:4px;height:1px;background:#dcdcdc;"></div>
<div style="left:1176.4px;top:973.46px;width:4px;height:1px;background:#dcdcdc;"></div>
<div style="left:1176.4px;top:995.04px;width:4px;height:1px;background:#dcdcdc;"></div>
<div style="left:1176.4px;top:1016.62px;width:4px;height:1px;background:#dcdcdc;"></div>
<div style="left:1176.4px;top:1038.2px;width:4px;height:1px;background:#dcdcdc;"></div>
<div style="left:1176.4px;top:1059.78px;width:4px;height:1px;background:#dcdcdc;"></div>
<div style="left:1176.4px;top:1081.36px;width:4px;height:1px;background:#dcdcdc;"></div>
<div style="left:1181.4px;top:655.75px;width:93.24px;height:10.6px;background:#5b538b;border-radius:1.2px;"></div>
<span class="t" style="top:656px;font-size:11.8px;color:#5b538b;left:1114.92px;transform:scaleX(0.9393);transform-origin:0 50%;-webkit-text-stroke:0.25px #5b538b;">Yuli Phelps</span>
<span class="t" style="top:655px;font-size:14.6px;color:#5b538b;left:1280.77px;transform:scaleX(1.0171);transform-origin:0 50%;">9</span>
<div style="left:1181.4px;top:677.33px;width:93.24px;height:10.6px;background:#5b538b;border-radius:1.2px;"></div>
<span class="t" style="top:678px;font-size:11.8px;color:#5b538b;left:1086.63px;transform:scaleX(0.9675);transform-origin:0 50%;-webkit-text-stroke:0.25px #5b538b;">Catherine Terrell</span>
<span class="t" style="top:676px;font-size:14.6px;color:#5b538b;left:1280.77px;transform:scaleX(1.0171);transform-origin:0 50%;">9</span>
<div style="left:1181.4px;top:698.91px;width:82.88px;height:10.6px;background:#5b538b;border-radius:1.2px;"></div>
<span class="t" style="top:699px;font-size:11.8px;color:#5b538b;left:1092.74px;transform:scaleX(0.9519);transform-origin:0 50%;-webkit-text-stroke:0.25px #5b538b;">Charissa Gould</span>
<span class="t" style="top:698px;font-size:14.6px;color:#5b538b;left:1270.41px;transform:scaleX(1.0171);transform-origin:0 50%;">8</span>
<div style="left:1181.4px;top:720.49px;width:82.88px;height:10.6px;background:#5b538b;border-radius:1.2px;"></div>
<span class="t" style="top:721px;font-size:11.8px;color:#5b538b;left:1104.77px;transform:scaleX(0.9371);transform-origin:0 50%;-webkit-text-stroke:0.25px #5b538b;">Brielle Payne</span>
<span class="t" style="top:719px;font-size:14.6px;color:#5b538b;left:1270.41px;transform:scaleX(1.0171);transform-origin:0 50%;">8</span>
<div style="left:1181.4px;top:742.07px;width:72.52px;height:10.6px;background:#5b538b;border-radius:1.2px;"></div>
<span class="t" style="top:743px;font-size:11.8px;color:#5b538b;left:1101.71px;transform:scaleX(0.9215);transform-origin:0 50%;-webkit-text-stroke:0.25px #5b538b;">Omar Massey</span>
<span class="t" style="top:741px;font-size:14.6px;color:#5b538b;left:1259.98px;transform:scaleX(1.0171);transform-origin:0 50%;">7</span>
<div style="left:1181.4px;top:763.65px;width:72.52px;height:10.6px;background:#5b538b;border-radius:1.2px;"></div>
<span class="t" style="top:764px;font-size:11.8px;color:#5b538b;left:1073.99px;transform:scaleX(0.9643);transform-origin:0 50%;-webkit-text-stroke:0.25px #5b538b;">Batool Christensen</span>
<span class="t" style="top:762px;font-size:14.6px;color:#5b538b;left:1259.98px;transform:scaleX(1.0171);transform-origin:0 50%;">7</span>
<div style="left:1181.4px;top:785.23px;width:72.52px;height:10.6px;background:#5b538b;border-radius:1.2px;"></div>
<span class="t" style="top:786px;font-size:11.8px;color:#5b538b;left:1090.41px;transform:scaleX(0.9435);transform-origin:0 50%;-webkit-text-stroke:0.25px #5b538b;">Martena Palmer</span>
<span class="t" style="top:784px;font-size:14.6px;color:#5b538b;left:1259.98px;transform:scaleX(1.0171);transform-origin:0 50%;">7</span>
<div style="left:1181.4px;top:806.81px;width:72.52px;height:10.6px;background:#5b538b;border-radius:1.2px;"></div>
<span class="t" style="top:807px;font-size:11.8px;color:#5b538b;left:1084.99px;transform:scaleX(0.9213);transform-origin:0 50%;-webkit-text-stroke:0.25px #5b538b;">Jordan Alexander</span>
<span class="t" style="top:806px;font-size:14.6px;color:#5b538b;left:1259.98px;transform:scaleX(1.0171);transform-origin:0 50%;">7</span>
<div style="left:1181.4px;top:828.39px;width:72.52px;height:10.6px;background:#5b538b;border-radius:1.2px;"></div>
<span class="t" style="top:829px;font-size:11.8px;color:#5b538b;left:1102.83px;transform:scaleX(0.9727);transform-origin:0 50%;-webkit-text-stroke:0.25px #5b538b;">Clementine...</span>
<span class="t" style="top:827px;font-size:14.6px;color:#5b538b;left:1259.98px;transform:scaleX(1.0171);transform-origin:0 50%;">7</span>
<div style="left:1181.4px;top:849.97px;width:72.52px;height:10.6px;background:#5b538b;border-radius:1.2px;"></div>
<span class="t" style="top:850px;font-size:11.8px;color:#5b538b;left:1095.33px;transform:scaleX(0.9680);transform-origin:0 50%;-webkit-text-stroke:0.25px #5b538b;">Chiquita Ratliff</span>
<span class="t" style="top:849px;font-size:14.6px;color:#5b538b;left:1259.98px;transform:scaleX(1.0171);transform-origin:0 50%;">7</span>
<div style="left:1181.4px;top:871.55px;width:72.52px;height:10.6px;background:#5b538b;border-radius:1.2px;"></div>
<span class="t" style="top:872px;font-size:11.8px;color:#5b538b;left:1084.66px;transform:scaleX(0.9824);transform-origin:0 50%;-webkit-text-stroke:0.25px #5b538b;">Ibrahim Huffman</span>
<span class="t" style="top:870px;font-size:14.6px;color:#5b538b;left:1259.98px;transform:scaleX(1.0171);transform-origin:0 50%;">7</span>
<div style="left:1181.4px;top:893.13px;width:62.16px;height:10.6px;background:#5b538b;border-radius:1.2px;"></div>
<span class="t" style="top:894px;font-size:11.8px;color:#5b538b;left:1079.78px;transform:scaleX(0.9268);transform-origin:0 50%;-webkit-text-stroke:0.25px #5b538b;">Rebekah Gallegos</span>
<span class="t" style="top:892px;font-size:14.6px;color:#5b538b;left:1249.62px;transform:scaleX(1.0171);transform-origin:0 50%;">6</span>
<div style="left:1181.4px;top:914.71px;width:62.16px;height:10.6px;background:#5b538b;border-radius:1.2px;"></div>
<span class="t" style="top:915px;font-size:11.8px;color:#5b538b;left:1101.02px;transform:scaleX(0.9324);transform-origin:0 50%;-webkit-text-stroke:0.25px #5b538b;">Luna Guzman</span>
<span class="t" style="top:913px;font-size:14.6px;color:#5b538b;left:1249.62px;transform:scaleX(1.0171);transform-origin:0 50%;">6</span>
<div style="left:1181.4px;top:936.29px;width:62.16px;height:10.6px;background:#5b538b;border-radius:1.2px;"></div>
<span class="t" style="top:937px;font-size:11.8px;color:#5b538b;left:1090.11px;transform:scaleX(0.9384);transform-origin:0 50%;-webkit-text-stroke:0.25px #5b538b;">Belle Stevenson</span>
<span class="t" style="top:935px;font-size:14.6px;color:#5b538b;left:1249.62px;transform:scaleX(1.0171);transform-origin:0 50%;">6</span>
<div style="left:1181.4px;top:957.87px;width:62.16px;height:10.6px;background:#5b538b;border-radius:1.2px;"></div>
<span class="t" style="top:958px;font-size:11.8px;color:#5b538b;left:1104.41px;transform:scaleX(0.9390);transform-origin:0 50%;-webkit-text-stroke:0.25px #5b538b;">Fleur Vaughn</span>
<span class="t" style="top:957px;font-size:14.6px;color:#5b538b;left:1249.62px;transform:scaleX(1.0171);transform-origin:0 50%;">6</span>
<div style="left:1181.4px;top:979.45px;width:51.8px;height:10.6px;background:#5b538b;border-radius:1.2px;"></div>
<span class="t" style="top:980px;font-size:11.8px;color:#5b538b;left:1098.5px;transform:scaleX(0.9499);transform-origin:0 50%;-webkit-text-stroke:0.25px #5b538b;">Laurel Gordon</span>
<span class="t" style="top:978px;font-size:14.6px;color:#5b538b;left:1239.41px;transform:scaleX(1.0171);transform-origin:0 50%;">5</span>
<div style="left:1181.4px;top:1001.03px;width:51.8px;height:10.6px;background:#5b538b;border-radius:1.2px;"></div>
<span class="t" style="top:1001px;font-size:11.8px;color:#5b538b;left:1088.6px;transform:scaleX(0.9311);transform-origin:0 50%;-webkit-text-stroke:0.25px #5b538b;">Waistband Perry</span>
<span class="t" style="top:1000px;font-size:14.6px;color:#5b538b;left:1239.41px;transform:scaleX(1.0171);transform-origin:0 50%;">5</span>
<div style="left:1181.4px;top:1022.61px;width:41.44px;height:10.6px;background:#5b538b;border-radius:1.2px;"></div>
<span class="t" style="top:1023px;font-size:11.8px;color:#5b538b;left:1104.1px;transform:scaleX(0.9500);transform-origin:0 50%;-webkit-text-stroke:0.25px #5b538b;">Denton Craig</span>
<span class="t" style="top:1021px;font-size:14.6px;color:#5b538b;left:1229.34px;transform:scaleX(1.0171);transform-origin:0 50%;">4</span>
<div style="left:1181.4px;top:1044.19px;width:41.44px;height:10.6px;background:#5b538b;border-radius:1.2px;"></div>
<span class="t" style="top:1045px;font-size:11.8px;color:#5b538b;left:1067.3px;transform:scaleX(0.9482);transform-origin:0 50%;-webkit-text-stroke:0.25px #5b538b;">Mohammed Tutunge</span>
<span class="t" style="top:1043px;font-size:14.6px;color:#5b538b;left:1229.34px;transform:scaleX(1.0171);transform-origin:0 50%;">4</span>
<div style="left:1181.4px;top:1065.77px;width:41.44px;height:10.6px;background:#5b538b;border-radius:1.2px;"></div>
<span class="t" style="top:1066px;font-size:11.8px;color:#5b538b;left:1118.4px;transform:scaleX(0.9109);transform-origin:0 50%;-webkit-text-stroke:0.25px #5b538b;">Alaa Estes</span>
<span class="t" style="top:1065px;font-size:14.6px;color:#5b538b;left:1229.34px;transform:scaleX(1.0171);transform-origin:0 50%;">4</span>
</section>
<section class="g" aria-label="percentages">
<div style="left:1390.2px;top:318.8px;width:457.6px;height:775.4px;background:#fff;border-radius:8px 11px 11px 8px;"></div>
<div style="left:1390px;top:318.6px;width:10.8px;height:775.6px;background:#2d5f83;border-radius:8px 0 0 8px;"></div>
<h2 class="t" style="top:335px;font-size:28.6px;color:#2d5f83;font-weight:700;left:1429.91px;transform:scaleX(0.9535);transform-origin:0 50%;">Customers Mony Transfer</h2>
<h2 class="t" style="top:374px;font-size:28.6px;color:#2d5f83;font-weight:700;left:1429.24px;transform:scaleX(0.9479);transform-origin:0 50%;">Methods Percentage " % "</h2>
<svg style="left:0;top:0" width="1920" height="1200" viewBox="0 0 1920 1200"><path d="M1623.4 435.7 A106.1 106.1 0 0 1 1725.83 514.12 L1702.27 520.49 A81.7 81.7 0 0 0 1623.4 460.1 Z" fill="#2e5f83"/><path d="M1725.83 514.12 A106.1 106.1 0 0 1 1546.06 614.43 L1563.84 597.73 A81.7 81.7 0 0 0 1702.27 520.49 Z" fill="#de7b41"/><path d="M1546.06 614.43 A106.1 106.1 0 0 1 1530.75 490.1 L1552.05 501.99 A81.7 81.7 0 0 0 1563.84 597.73 Z" fill="#39732e"/><path d="M1530.75 490.1 A106.1 106.1 0 0 1 1623.4 435.7 L1623.4 460.1 A81.7 81.7 0 0 0 1552.05 501.99 Z" fill="#4a9fd7"/><path d="M1623.4 461.1 L1623.4 434.7" stroke="#fff" stroke-width="2.4"/><path d="M1701.31 520.75 L1726.79 513.86" stroke="#fff" stroke-width="2.4"/><path d="M1564.57 597.04 L1545.33 615.11" stroke="#fff" stroke-width="2.4"/><path d="M1552.93 502.48 L1529.87 489.62" stroke="#fff" stroke-width="2.4"/><path d="M1563 437.7 L1570.5 437.7 L1575.4 458.3" fill="none" stroke="#a6a6a6" stroke-width="1"/><path d="M1707.1 438.3 L1699.7 438.3 L1680.5 467.1" fill="none" stroke="#a6a6a6" stroke-width="1"/><path d="M1492.5 583.8 L1500 583.8 L1530 553.8" fill="none" stroke="#a6a6a6" stroke-width="1"/><path d="M1707.1 643.5 L1700.7 643.5 L1669.4 624.3" fill="none" stroke="#a6a6a6" stroke-width="1"/></svg>
<span class="t" style="top:432px;font-size:14.6px;color:#404040;left:1508.42px;transform:scaleX(0.9904);transform-origin:0 50%;">16.90%</span>
<span class="t" style="top:433px;font-size:14.6px;color:#404040;left:1712.27px;">20.80%</span>
<span class="t" style="top:577px;font-size:14.6px;color:#404040;left:1437.27px;">20.10%</span>
<span class="t" style="top:637px;font-size:14.6px;color:#404040;left:1714.21px;transform:scaleX(0.9761);transform-origin:0 50%;">42.20%</span>
<svg style="left:1570px;top:495px;" width="110" height="100" viewBox="0 0 1320 1200"><g fill="none" stroke="#2f7030" stroke-width="18" stroke-linejoin="round" stroke-linecap="round"><path d="M675 100 L1040 370 C930 440 840 540 790 650 C740 780 720 900 690 990 C660 1060 610 1100 560 1120 L235 815 C310 770 360 680 385 570 C420 400 520 200 675 100 Z"/><path d="M610 235 L712 210 L880 325 L890 410 C820 470 770 560 740 650 C710 760 680 880 640 950 L610 988 L545 1006 L365 856 L355 776 C400 720 425 640 445 560 C470 450 530 310 610 235 Z"/><ellipse cx="597" cy="580" rx="88" ry="80" transform="rotate(25 597 580)"/><circle cx="718" cy="370" r="32"/><circle cx="521" cy="806" r="32"/><path d="M395 520 C420 440 430 380 400 330 C360 290 300 300 250 285 C210 270 170 250 150 215 C120 260 125 330 200 385 C175 420 215 470 265 490 C255 520 320 525 350 540 C365 550 375 560 378 575"/><path d="M780 660 C820 620 880 595 950 610 C1010 625 1040 690 1090 745 C1130 780 1170 800 1215 805 C1190 860 1130 900 1060 880 L1020 845 C1000 900 930 920 885 840 C850 880 800 830 770 780 L765 720"/></g></svg>
<div style="left:1440px;top:678.2px;width:6.2px;height:6.2px;background:#2e5f83;"></div>
<span class="t" style="top:674px;font-size:14.6px;color:#595959;left:1450.85px;transform:scaleX(0.9862);transform-origin:0 50%;">Debt Card</span>
<div style="left:1530.8px;top:678.2px;width:6.2px;height:6.2px;background:#de7b41;"></div>
<span class="t" style="top:674px;font-size:14.6px;color:#595959;left:1541.35px;transform:scaleX(0.9848);transform-origin:0 50%;">Hawala</span>
<div style="left:1605.8px;top:678.2px;width:6.2px;height:6.2px;background:#39732e;"></div>
<span class="t" style="top:674px;font-size:14.6px;color:#595959;left:1615.65px;transform:scaleX(0.9849);transform-origin:0 50%;">Master Card</span>
<div style="left:1710.5px;top:678.2px;width:6.2px;height:6.2px;background:#4a9fd7;"></div>
<span class="t" style="top:674px;font-size:14.6px;color:#595959;left:1720.43px;transform:scaleX(0.9794);transform-origin:0 50%;">Western Union</span>
<div style="left:1447px;top:706.4px;width:355.5px;height:2.2px;background:#2d5f83;"></div>
<h2 class="t" style="top:725px;font-size:28.6px;color:#2d5f83;font-weight:700;left:1429.24px;transform:scaleX(0.9444);transform-origin:0 50%;">Percentage " % " of Customers</h2>
<h2 class="t" style="top:765px;font-size:28.6px;color:#2d5f83;font-weight:700;left:1429.09px;transform:scaleX(0.9536);transform-origin:0 50%;">in Each Country</h2>
<svg style="left:0;top:0" width="1920" height="1200" viewBox="0 0 1920 1200"><path d="M1622.4 824 A106.6 106.6 0 0 1 1713.47 986.01 L1692.45 973.23 A82 82 0 0 0 1622.4 848.6 Z" fill="#2e5f83"/><path d="M1713.47 986.01 A106.6 106.6 0 0 1 1599.15 1034.63 L1604.51 1010.63 A82 82 0 0 0 1692.45 973.23 Z" fill="#de7b41"/><path d="M1599.15 1034.63 A106.6 106.6 0 0 1 1520.41 899.58 L1543.95 906.74 A82 82 0 0 0 1604.51 1010.63 Z" fill="#39732e"/><path d="M1520.41 899.58 A106.6 106.6 0 0 1 1580.68 832.5 L1590.31 855.14 A82 82 0 0 0 1543.95 906.74 Z" fill="#4a9fd7"/><path d="M1580.68 832.5 A106.6 106.6 0 0 1 1622.4 824 L1622.4 848.6 A82 82 0 0 0 1590.31 855.14 Z" fill="#9b309b"/><path d="M1622.4 849.6 L1622.4 823" stroke="#fff" stroke-width="2.4"/><path d="M1691.6 972.71 L1714.32 986.53" stroke="#fff" stroke-width="2.4"/><path d="M1604.73 1009.65 L1598.93 1035.61" stroke="#fff" stroke-width="2.4"/><path d="M1544.91 907.03 L1519.46 899.28" stroke="#fff" stroke-width="2.4"/><path d="M1590.7 856.06 L1580.29 831.58" stroke="#fff" stroke-width="2.4"/><path d="M1635 807.2 L1625.6 807.2 L1604.7 837.4" fill="none" stroke="#a6a6a6" stroke-width="1"/><path d="M1511 846.4 L1518.8 846.4 L1552.5 867.8" fill="none" stroke="#a6a6a6" stroke-width="1"/><path d="M1731.4 859.6 L1724.2 859.6 L1704.6 884.8" fill="none" stroke="#a6a6a6" stroke-width="1"/><path d="M1679.1 1037.2 L1671.9 1037.2 L1659.6 1019.1" fill="none" stroke="#a6a6a6" stroke-width="1"/><path d="M1509.8 998 L1518 998 L1541.1 978.4" fill="none" stroke="#a6a6a6" stroke-width="1"/></svg>
<span class="t" style="top:800px;font-size:14.6px;color:#404040;left:1639.67px;transform:scaleX(1.0062);transform-origin:0 50%;">6.40%</span>
<span class="t" style="top:854px;font-size:14.6px;color:#404040;left:1736.92px;transform:scaleX(0.9903);transform-origin:0 50%;">33.70%</span>
<span class="t" style="top:1031px;font-size:14.6px;color:#404040;left:1684.3px;">19.80%</span>
<span class="t" style="top:991px;font-size:14.6px;color:#404040;left:1455.07px;">26.20%</span>
<span class="t" style="top:840px;font-size:14.6px;color:#404040;left:1455.9px;">13.90%</span>
<svg style="left:1579.9px;top:888.9px;" width="83.6" height="83.6" viewBox="408 403 427 427"><circle cx="621.5" cy="616.5" r="203" fill="#fff" stroke="#35722e" stroke-width="21"/><path d="M488 603 C492 575 515 556 548 553 C580 550 610 556 640 566 C655 572 664 590 674 606 C684 622 700 632 712 640 C706 662 684 684 672 704 C666 730 664 752 646 768 C632 780 610 780 598 766 C586 748 584 716 580 694 C574 672 552 660 530 652 C508 642 486 628 488 603 Z" fill="#35722e"/><path d="M512 492 L528 478 L538 490 L530 504 Z" fill="#35722e"/><path d="M548 478 C560 462 585 450 615 446 C640 443 665 452 690 440 C700 436 712 438 722 442 C762 462 798 496 818 540 C830 566 832 600 826 625 L806 598 L792 632 C778 620 770 600 756 588 C746 580 732 574 724 580 C722 592 716 600 708 604 C698 596 690 584 676 576 L664 572 C660 560 648 548 640 544 C630 542 616 544 606 540 L600 522 C590 528 584 536 572 534 L568 518 C556 524 548 538 532 544 C522 546 510 542 508 534 C512 522 526 518 538 514 L524 506 C532 498 544 500 556 494 C572 488 590 486 600 476 C606 466 596 460 586 464 C574 468 562 476 548 478 Z" fill="#35722e"/></svg>
<div style="left:1431.2px;top:1072px;width:6.2px;height:6.2px;background:#2e5f83;"></div>
<span class="t" style="top:1068px;font-size:14.6px;color:#595959;left:1441.38px;transform:scaleX(0.9567);transform-origin:0 50%;">Egypt</span>
<div style="left:1485px;top:1072px;width:6.2px;height:6.2px;background:#de7b41;"></div>
<span class="t" style="top:1068px;font-size:14.6px;color:#595959;left:1494.39px;transform:scaleX(1.0766);transform-origin:0 50%;">Iraq</span>
<div style="left:1528.3px;top:1072px;width:6.2px;height:6.2px;background:#39732e;"></div>
<span class="t" style="top:1068px;font-size:14.6px;color:#595959;left:1538.16px;transform:scaleX(0.9680);transform-origin:0 50%;">Saudi Arabia</span>
<div style="left:1626.7px;top:1072px;width:6.2px;height:6.2px;background:#4a9fd7;"></div>
<span class="t" style="top:1068px;font-size:14.6px;color:#595959;left:1636.38px;transform:scaleX(0.9368);transform-origin:0 50%;">Syria</span>
<div style="left:1675.8px;top:1072px;width:6.2px;height:6.2px;background:#9b309b;"></div>
<span class="t" style="top:1068px;font-size:14.6px;color:#595959;left:1685.93px;transform:scaleX(0.9812);transform-origin:0 50%;">United Arab Emirates</span>
</section>
<header class="g" aria-label="title bar">
<svg style="left:20.5px;top:21px;" width="22" height="22.5" viewBox="0 0 22 22.5"><defs><linearGradient id="xg" x1="0" y1="0" x2="0" y2="1"><stop offset="0" stop-color="#9fd88a"/><stop offset="0.45" stop-color="#4fae56"/><stop offset="1" stop-color="#1d6a3a"/></linearGradient></defs><rect x="4.6" y="0.6" width="16.6" height="19.4" rx="2.6" fill="url(#xg)"/><rect x="12.6" y="0.6" width="8.6" height="6.6" rx="1.6" fill="#b5e29d"/><rect x="4.6" y="0.6" width="8.4" height="6.6" rx="1.6" fill="#6fc06a"/><rect x="0.4" y="7.4" width="12.6" height="12.6" rx="2.4" fill="#176b3a"/><path d="M4 10.6 L9.4 16.8 M9.4 10.6 L4 16.8" stroke="#fff" stroke-width="1.7"/><rect x="13" y="15.6" width="8.2" height="5.8" rx="1.6" fill="#175f33"/></svg>
<span class="t" style="top:26px;font-size:14.8px;color:#2b2b2b;left:64.3px;transform:scaleX(0.9167);transform-origin:0 50%;">AutoSave</span>
<div style="left:132.4px;top:19.1px;width:57px;height:26px;background:#fcfcfd;border-radius:13px;border:1.5px solid #565656;"></div>
<div style="left:136.2px;top:23px;width:18px;height:18px;background:#5d5d5d;border-radius:9px;"></div>
<span class="t" style="top:26px;font-size:14.8px;color:#3a3a3a;left:160.29px;transform:scaleX(1.0705);transform-origin:0 50%;">Off</span>
<svg style="left:206px;top:21.6px;" width="22.5" height="21.8" viewBox="0 0 22.5 21.8"><path d="M1.2 1 H18.6 L21.4 3.8 V20.8 H1.2 Z" fill="#d48fe2" stroke="#9a3db8" stroke-width="1.3" stroke-linejoin="round"/><rect x="5.2" y="1.2" width="12" height="7.4" fill="#f6f2f8" stroke="#9a3db8" stroke-width="1.1"/><rect x="6.4" y="13.4" width="9.8" height="7.2" fill="#f6f2f8" stroke="#9a3db8" stroke-width="1.1"/></svg>
<svg style="left:245.5px;top:21.4px;" width="21" height="22.4" viewBox="0 0 21 22.4"><path d="M1.6 1.4 V8.6 H8.8" fill="none" stroke="#333" stroke-width="1.5" stroke-linecap="round" stroke-linejoin="round"/><path d="M2 8.2 C5 3.6 10.6 1.6 15 4.2 C19.6 7 20.2 12.6 17 16.6 L10 21.4" fill="none" stroke="#333" stroke-width="1.5" stroke-linecap="round"/></svg>
<svg style="left:274.5px;top:29.2px;" width="9" height="5.6" viewBox="0 0 9 5.6"><path d="M1 1 L4.5 4.6 L8 1" fill="none" stroke="#333" stroke-width="1.4" stroke-linecap="round" stroke-linejoin="round"/></svg>
<svg style="left:298.6px;top:21.4px;" width="21" height="22.4" viewBox="0 0 21 22.4"><path d="M17.6 1.4 V8.6 H10.4" fill="none" stroke="#b3b6bb" stroke-width="1.4" stroke-linecap="round" stroke-linejoin="round"/><path d="M17.2 8.2 C14.2 3.6 8.6 1.6 4.2 4.2 C-0.4 7 -1 12.6 2.2 16.6 L9.2 21.4" fill="none" stroke="#b3b6bb" stroke-width="1.4" stroke-linecap="round"/></svg>
<svg style="left:326.4px;top:29.4px;" width="8.4" height="5.2" viewBox="0 0 8.4 5.2"><path d="M1 1 L4.2 4.2 L7.4 1" fill="none" stroke="#c3c6ca" stroke-width="1.2" stroke-linecap="round" stroke-linejoin="round"/></svg>
<svg style="left:353.6px;top:26.6px;" width="11" height="11" viewBox="0 0 11 11"><path d="M1 1.4 H10" stroke="#333" stroke-width="1.4" stroke-linecap="round"/><path d="M1.6 5.2 L5.5 9.2 L9.4 5.2" fill="none" stroke="#333" stroke-width="1.4" stroke-linecap="round" stroke-linejoin="round"/></svg>
<span class="t" style="top:25px;font-size:16.2px;color:#2b2b2b;left:398.04px;transform:scaleX(0.9708);transform-origin:0 50%;">Dashboards (version 1)</span>
<svg style="left:566.3px;top:28.6px;" width="13.4" height="7.6" viewBox="0 0 13.4 7.6"><path d="M1 1 L6.7 6.6 L12.4 1" fill="none" stroke="#333" stroke-width="1.4" stroke-linecap="round" stroke-linejoin="round"/></svg>
<div style="left:726.2px;top:11.8px;width:488.8px;height:40.8px;background:#fafafb;border-radius:5px;box-shadow:0 0.5px 0 0.6px #d3d6db,0 1.6px 2.4px rgba(0,0,0,0.18);"></div>
<svg style="left:744px;top:21px;" width="20" height="20" viewBox="0 0 20 20"><circle cx="12.4" cy="7.6" r="5.9" fill="none" stroke="#555" stroke-width="1.3"/><path d="M8.2 11.8 L1.2 18.8" stroke="#555" stroke-width="1.4" stroke-linecap="round"/></svg>
<span class="t" style="top:25px;font-size:17.2px;color:#5a5a5a;left:780.55px;transform:scaleX(0.9744);transform-origin:0 50%;">Search</span>
<div style="left:1679.6px;top:15.6px;width:32.4px;height:32.4px;background:#d1d2d4;border-radius:17px;"></div>
<svg style="left:1686px;top:20.6px;" width="20" height="22" viewBox="0 0 20 22"><circle cx="9.8" cy="6.2" r="4.9" fill="none" stroke="#3a3a3a" stroke-width="1.3"/><path d="M1.2 20.2 C1.2 14.4 4.6 12.6 9.8 12.6 C15 12.6 18.4 14.4 18.4 20.2" fill="none" stroke="#3a3a3a" stroke-width="1.3" stroke-linecap="round"/></svg>
<div style="left:1753px;top:30.8px;width:14.2px;height:1.4px;background:#1f1f1f;"></div>
<svg style="left:1816.6px;top:24.4px;" width="15" height="15" viewBox="0 0 15 15"><rect x="1.2" y="3.6" width="9.8" height="9.8" rx="2.2" fill="none" stroke="#1f1f1f" stroke-width="1.3"/><path d="M4.2 1.2 H10.6 A3 3 0 0 1 13.6 4.2 V10.6" fill="none" stroke="#1f1f1f" stroke-width="1.3"/></svg>
<svg style="left:1880.6px;top:24.6px;" width="15" height="15" viewBox="0 0 15 15"><path d="M1 1 L14 14 M14 1 L1 14" stroke="#1f1f1f" stroke-width="1.4" stroke-linecap="round"/></svg>
</header>
<nav class="g" aria-label="ribbon tabs">
<span class="t" style="top:77px;font-size:17.8px;color:#2b2b2b;left:27.39px;transform:scaleX(0.9912);transform-origin:0 50%;">File</span>
<span class="t" style="top:77px;font-size:17.8px;color:#1c1c1c;font-weight:700;left:88.81px;transform:scaleX(1.0249);transform-origin:0 50%;">Home</span>
<span class="t" style="top:77px;font-size:17.8px;color:#2b2b2b;left:165.23px;transform:scaleX(0.9811);transform-origin:0 50%;">Insert</span>
<span class="t" style="top:77px;font-size:17.8px;color:#2b2b2b;left:235.56px;transform:scaleX(1.0090);transform-origin:0 50%;">Draw</span>
<span class="t" style="top:77px;font-size:17.8px;color:#2b2b2b;left:304.92px;transform:scaleX(0.9702);transform-origin:0 50%;">Page Layout</span>
<span class="t" style="top:77px;font-size:17.8px;color:#2b2b2b;left:429.09px;transform:scaleX(0.9906);transform-origin:0 50%;">Formulas</span>
<span class="t" style="top:77px;font-size:17.8px;color:#2b2b2b;left:528.59px;transform:scaleX(0.9908);transform-origin:0 50%;">Data</span>
<span class="t" style="top:77px;font-size:17.8px;color:#2b2b2b;left:592.44px;transform:scaleX(0.9515);transform-origin:0 50%;">Review</span>
<span class="t" style="top:77px;font-size:17.8px;color:#2b2b2b;left:674.91px;transform:scaleX(0.9822);transform-origin:0 50%;">View</span>
<span class="t" style="top:77px;font-size:17.8px;color:#2b2b2b;left:740.5px;transform:scaleX(1.0215);transform-origin:0 50%;">Automate</span>
<span class="t" style="top:77px;font-size:17.8px;color:#2b2b2b;left:844.3px;transform:scaleX(1.0510);transform-origin:0 50%;">Help</span>
<span class="t" style="top:77px;font-size:17.8px;color:#2b2b2b;left:909.09px;transform:scaleX(0.9898);transform-origin:0 50%;">Power Pivot</span>
<span class="t" style="top:77px;font-size:17.8px;color:#2b2b2b;left:1031.64px;transform:scaleX(0.9558);transform-origin:0 50%;">Easy QR Code and Barcode</span>
<div style="left:89.2px;top:97px;width:50.4px;height:2.6px;background:#1f7244;border-radius:1.3px;"></div>
<div style="left:1676.2px;top:68px;width:122px;height:31.6px;background:#fff;border-radius:5px;border:1.2px solid #8a8a8a;"></div>
<svg style="left:1683.4px;top:75.4px;" width="16" height="16" viewBox="0 0 16 16"><path d="M1.4 1.2 H13.8 V10.6 H6.4 L3.2 13.6 V10.6 H1.4 Z" fill="none" stroke="#333" stroke-width="1.3" stroke-linejoin="round"/></svg>
<span class="t" style="top:77px;font-size:17.6px;color:#2b2b2b;left:1703.61px;transform:scaleX(1.0072);transform-origin:0 50%;">Comments</span>
<div style="left:1809.2px;top:68px;width:94.6px;height:31.6px;background:#2e7d41;border-radius:5px;"></div>
<svg style="left:1815px;top:74px;" width="18" height="18" viewBox="0 0 18 18"><path d="M5.4 5.2 H2 V16.6 H13.6 V13" fill="none" stroke="#fff" stroke-width="1.4" stroke-linejoin="round"/><path d="M5.6 11.6 C6 7.6 9 5.6 12.4 5.6 V2.2 L16.8 6.8 L12.4 11.2 V8 C9.6 8 7.4 8.8 5.6 11.6 Z" fill="none" stroke="#fff" stroke-width="1.3" stroke-linejoin="round"/></svg>
<span class="t" style="top:77px;font-size:17.6px;color:#fff;left:1836.75px;transform:scaleX(0.9488);transform-origin:0 50%;">Share</span>
<svg style="left:1889.9px;top:81.7px;" width="8.6" height="5.4" viewBox="0 0 8.6 5.4"><path d="M1 1 L4.3 4.4 L7.6 1" fill="none" stroke="#fff" stroke-width="1.4" stroke-linecap="round" stroke-linejoin="round"/></svg>
</nav>
<section class="g" aria-label="ribbon">
<div style="left:11px;top:103.8px;width:1897.8px;height:133.2px;background:#fff;border-radius:10px;box-shadow:0 0.6px 2.4px rgba(0,0,0,0.28);"></div>
<svg style="left:39px;top:116px;" width="37.4" height="40" viewBox="0 0 37.4 40"><rect x="1.4" y="5.6" width="26.6" height="31" rx="1.6" fill="#f2f4fb" stroke="#f0a545" stroke-width="1.9"/><rect x="3" y="7.2" width="23.4" height="27.8" fill="none" stroke="#fbe3b4" stroke-width="1.2"/><path d="M6.6 10.4 V7 Q6.6 6 7.8 6 H10.4 C10.4 2.8 12.2 0.9 14.8 0.9 C17.4 0.9 19.2 2.8 19.2 6 H21.8 Q23 6 23 7 V10.4 Z" fill="#f7f7f9" stroke="#808080" stroke-width="1.3" stroke-linejoin="round"/><rect x="18.6" y="16.2" width="17.8" height="22.8" fill="#fff" stroke="#3d3d3d" stroke-width="1.4"/></svg>
<span class="t" style="top:164px;font-size:15.4px;color:#2b2b2b;left:35.64px;transform:scaleX(0.9406);transform-origin:0 50%;">Paste</span>
<svg style="left:49.5px;top:189.9px;" width="8.6" height="5.4" viewBox="0 0 8.6 5.4"><path d="M1 1 L4.3 4.4 L7.6 1" fill="none" stroke="#3b3b3b" stroke-width="1.4" stroke-linecap="round" stroke-linejoin="round"/></svg>
<svg style="left:94px;top:115px;" width="15" height="21.4" viewBox="0 0 15 21.4"><path d="M3.6 0.8 L10.8 15 M11 0.8 L3.8 15" stroke="#444" stroke-width="1.05" fill="none"/><circle cx="3.4" cy="17.8" r="2.2" fill="none" stroke="#2f7ed8" stroke-width="1.15"/><circle cx="11.4" cy="17.8" r="2.2" fill="none" stroke="#2f7ed8" stroke-width="1.15"/></svg>
<svg style="left:90px;top:149px;" width="22.4" height="22" viewBox="0 0 22.4 22"><path d="M5.6 16 H1 V1 H9.2 L12.4 4.2" fill="none" stroke="#3d3d3d" stroke-width="1.3" stroke-linejoin="round"/><path d="M8.8 5 H16.6 L21 9.4 V21 H8.8 Z" fill="#fff" stroke="#3d3d3d" stroke-width="1.3" stroke-linejoin="round"/><path d="M12.4 14 H17.6 M12.4 17 H17.6" stroke="#3d3d3d" stroke-width="1.1"/></svg>
<svg style="left:129px;top:157.7px;" width="8.6" height="5.4" viewBox="0 0 8.6 5.4"><path d="M1 1 L4.3 4.4 L7.6 1" fill="none" stroke="#3b3b3b" stroke-width="1.4" stroke-linecap="round" stroke-linejoin="round"/></svg>
<svg style="left:91px;top:184px;" width="21.4" height="20" viewBox="0 0 21.4 20"><path d="M13 5.6 L16.6 1.4 C17.6 0.4 19.2 0.6 20 1.6 C20.8 2.6 20.6 4 19.6 4.8 L15.6 8.4" fill="#fff" stroke="#3d3d3d" stroke-width="1.2" stroke-linejoin="round"/><path d="M10.4 5.8 L15.6 11 L13.4 13.2 L8.2 8 Z" fill="#fff" stroke="#3d3d3d" stroke-width="1.2" stroke-linejoin="round"/><path d="M8 8.4 L13 13.4 L7.6 19 L0.8 11.4 Z" fill="#fbe3c2" stroke="#e08a32" stroke-width="1.3" stroke-linejoin="round"/><path d="M3.4 13.4 L8.6 16.6 M5.6 11.4 L10.2 14.8" stroke="#e08a32" stroke-width="1"/></svg>
<span class="t" style="top:217px;font-size:14.4px;color:#444;left:46.79px;transform:scaleX(0.9804);transform-origin:0 50%;">Clipboard</span>
<svg style="left:144.2px;top:219.4px;" width="10.4" height="10.4" viewBox="0 0 10.4 10.4"><path d="M0.7 6.4 V0.7 H6.4" fill="none" stroke="#444" stroke-width="1.2"/><path d="M3.6 3.6 L9.4 9.4 M9.6 4.6 V9.6 H4.6" fill="none" stroke="#444" stroke-width="1.2"/></svg>
<div style="left:158.8px;top:111.5px;width:1.1px;height:117.3px;background:#d2d2d2;"></div>
<div style="left:171.2px;top:120.4px;width:151.4px;height:31px;background:#fff;border-radius:4.5px;border:1.2px solid #8c8c8c;"></div>
<span class="t" style="top:129px;font-size:15.4px;color:#2b2b2b;left:174.6px;transform:scaleX(0.9494);transform-origin:0 50%;">Aptos Narrow</span>
<svg style="left:310px;top:134.5px;" width="8.6" height="5.4" viewBox="0 0 8.6 5.4"><path d="M1 1 L4.3 4.4 L7.6 1" fill="none" stroke="#3b3b3b" stroke-width="1.4" stroke-linecap="round" stroke-linejoin="round"/></svg>
<div style="left:326.2px;top:120.4px;width:68.4px;height:31px;background:#fff;border-radius:4.5px;border:1.2px solid #8c8c8c;"></div>
<span class="t" style="top:129px;font-size:15.4px;color:#2b2b2b;left:329.7px;transform:scaleX(0.9493);transform-origin:0 50%;">12</span>
<svg style="left:381.5px;top:134.5px;" width="8.6" height="5.4" viewBox="0 0 8.6 5.4"><path d="M1 1 L4.3 4.4 L7.6 1" fill="none" stroke="#3b3b3b" stroke-width="1.4" stroke-linecap="round" stroke-linejoin="round"/></svg>
<span class="t" style="top:125px;font-size:22.6px;color:#3b3b3b;left:404.4px;transform:scaleX(0.9448);transform-origin:0 50%;">A</span>
<svg style="left:418.4px;top:126.2px;" width="6" height="5" viewBox="0 0 6 5"><path d="M0.7 4 L3 1 L5.3 4" fill="none" stroke="#2f7ed8" stroke-width="1.2"/></svg>
<span class="t" style="top:128px;font-size:18.6px;color:#3b3b3b;left:440.6px;transform:scaleX(0.9378);transform-origin:0 50%;">A</span>
<svg style="left:452.6px;top:126.6px;" width="6" height="5" viewBox="0 0 6 5"><path d="M0.7 1 L3 4 L5.3 1" fill="none" stroke="#2f7ed8" stroke-width="1.2"/></svg>
<span class="t" style="top:169px;font-size:18px;color:#2b2b2b;font-weight:700;left:180.69px;transform:scaleX(0.9472);transform-origin:0 50%;">B</span>
<span class="t" style="left:217.6px;top:168px;font-size:18.6px;font-style:italic;color:#2b2b2b;font-family:'Liberation Serif',serif;">I</span>
<span class="t" style="top:170px;font-size:17px;color:#2b2b2b;left:248.58px;transform:scaleX(1.1146);transform-origin:0 50%;">U</span>
<div style="left:249.6px;top:185.8px;width:11.6px;height:1.3px;background:#2b2b2b;"></div>
<svg style="left:277px;top:176.1px;" width="8.6" height="5.4" viewBox="0 0 8.6 5.4"><path d="M1 1 L4.3 4.4 L7.6 1" fill="none" stroke="#3b3b3b" stroke-width="1.4" stroke-linecap="round" stroke-linejoin="round"/></svg>
<div style="left:295px;top:163.4px;width:1.1px;height:31.6px;background:#d2d2d2;"></div>
<svg style="left:303.4px;top:167.2px;" width="21.4" height="21.4" viewBox="0 0 21.4 21.4"><rect x="1" y="1" width="19.4" height="19" fill="none" stroke="#555" stroke-width="1.1" stroke-dasharray="1.4 1.5"/><path d="M10.7 1 V20 M1 10.5 H20.4" stroke="#555" stroke-width="1.1" stroke-dasharray="1.4 1.5"/><path d="M0.4 20.4 H21" stroke="#1f1f1f" stroke-width="1.6"/></svg>
<svg style="left:335.7px;top:176.1px;" width="8.6" height="5.4" viewBox="0 0 8.6 5.4"><path d="M1 1 L4.3 4.4 L7.6 1" fill="none" stroke="#3b3b3b" stroke-width="1.4" stroke-linecap="round" stroke-linejoin="round"/></svg>
<div style="left:353.3px;top:163.4px;width:1.1px;height:31.6px;background:#d2d2d2;"></div>
<svg style="left:362.4px;top:167.4px;" width="21.6" height="22" viewBox="0 0 21.6 22"><path d="M7.4 3.6 L9.8 1 L17.4 8.6 L10.6 15.4 L4 8.8 L8.4 4.4" fill="#fff" stroke="#3d3d3d" stroke-width="1.2" stroke-linejoin="round"/><path d="M7.6 6.4 V2.2 C7.6 1 9.6 1 9.6 2.2" fill="none" stroke="#3d3d3d" stroke-width="1.1"/><path d="M17.6 9.4 C19.4 11.6 19.6 13.4 18.4 14.2 C17.2 14.8 16.4 13 17.6 9.4 Z" fill="#2f7ed8"/><rect x="0" y="17" width="21.4" height="4.8" fill="#ffef3a"/></svg>
<svg style="left:394px;top:176.1px;" width="8.6" height="5.4" viewBox="0 0 8.6 5.4"><path d="M1 1 L4.3 4.4 L7.6 1" fill="none" stroke="#3b3b3b" stroke-width="1.4" stroke-linecap="round" stroke-linejoin="round"/></svg>
<span class="t" style="top:168px;font-size:17.6px;color:#3d3d3d;left:421.4px;transform:scaleX(1.1278);transform-origin:0 50%;">A</span>
<div style="left:417px;top:184.4px;width:21.8px;height:4.8px;background:#e5332d;"></div>
<svg style="left:449px;top:176.1px;" width="8.6" height="5.4" viewBox="0 0 8.6 5.4"><path d="M1 1 L4.3 4.4 L7.6 1" fill="none" stroke="#3b3b3b" stroke-width="1.4" stroke-linecap="round" stroke-linejoin="round"/></svg>
<span class="t" style="top:217px;font-size:14.4px;color:#444;left:292.19px;transform:scaleX(0.9646);transform-origin:0 50%;">Font</span>
<svg style="left:458.8px;top:219.4px;" width="10.4" height="10.4" viewBox="0 0 10.4 10.4"><path d="M0.7 6.4 V0.7 H6.4" fill="none" stroke="#444" stroke-width="1.2"/><path d="M3.6 3.6 L9.4 9.4 M9.6 4.6 V9.6 H4.6" fill="none" stroke="#444" stroke-width="1.2"/></svg>
<div style="left:473.3px;top:111.5px;width:1.1px;height:117.3px;background:#d2d2d2;"></div>
<svg style="left:480px;top:100px;" width="24" height="24" viewBox="0 0 24 24"><path d="M11.8 25.6 H30.8" stroke="#3b3b3b" stroke-width="1.3"/><path d="M14.2 31.2 H28.2" stroke="#3b3b3b" stroke-width="1.3"/><path d="M11.8 36.8 H30.8" stroke="#3b3b3b" stroke-width="1.3"/></svg>
<svg style="left:480px;top:100px;" width="24" height="24" viewBox="0 0 24 24"><path d="M46.8 30.6 H65.6" stroke="#3b3b3b" stroke-width="1.3"/><path d="M49.2 35.8 H63" stroke="#3b3b3b" stroke-width="1.3"/><path d="M46.8 40.8 H65.6" stroke="#3b3b3b" stroke-width="1.3"/></svg>
<div style="left:555px;top:120.4px;width:31.8px;height:31px;background:#ebebeb;border-radius:5px;border:1.2px solid #8c8c8c;"></div>
<svg style="left:480px;top:100px;" width="24" height="24" viewBox="0 0 24 24"><path d="M81.2 35 H100" stroke="#3b3b3b" stroke-width="1.3"/><path d="M83.8 40.2 H97.6" stroke="#3b3b3b" stroke-width="1.3"/><path d="M81.2 45.6 H100" stroke="#3b3b3b" stroke-width="1.3"/></svg>
<svg style="left:594px;top:123.4px;" width="23" height="22.6" viewBox="0 0 23 22.6"><path d="M6.4 21.4 L20.6 7.4 M15.6 6.8 L21 7 L21.2 12.4" fill="none" stroke="#2f7ed8" stroke-width="1.3" stroke-linejoin="round"/></svg>
<span class="t" style="top:130px;font-size:11.8px;color:#3b3b3b;left:596.77px;transform:scaleX(0.9051);transform-origin:0 50%;transform:rotate(-45deg) scaleX(0.93);transform-origin:0 80%;">ab</span>
<svg style="left:623.7px;top:134.5px;" width="8.6" height="5.4" viewBox="0 0 8.6 5.4"><path d="M1 1 L4.3 4.4 L7.6 1" fill="none" stroke="#3b3b3b" stroke-width="1.4" stroke-linecap="round" stroke-linejoin="round"/></svg>
<svg style="left:480px;top:100px;" width="24" height="24" viewBox="0 0 24 24"><path d="M11.8 70.8 H30.8" stroke="#3b3b3b" stroke-width="1.3"/><path d="M11.8 75.8 H25" stroke="#3b3b3b" stroke-width="1.3"/><path d="M11.8 80.8 H30.8" stroke="#3b3b3b" stroke-width="1.3"/><path d="M11.8 85.8 H25" stroke="#3b3b3b" stroke-width="1.3"/></svg>
<svg style="left:480px;top:100px;" width="24" height="24" viewBox="0 0 24 24"><path d="M46.8 70.8 H65.6" stroke="#3b3b3b" stroke-width="1.3"/><path d="M50 75.8 H62.6" stroke="#3b3b3b" stroke-width="1.3"/><path d="M46.8 80.8 H65.6" stroke="#3b3b3b" stroke-width="1.3"/><path d="M50 85.8 H62.6" stroke="#3b3b3b" stroke-width="1.3"/></svg>
<svg style="left:480px;top:100px;" width="24" height="24" viewBox="0 0 24 24"><path d="M81.2 70.8 H100" stroke="#3b3b3b" stroke-width="1.3"/><path d="M87 75.8 H100" stroke="#3b3b3b" stroke-width="1.3"/><path d="M81.2 80.8 H100" stroke="#3b3b3b" stroke-width="1.3"/><path d="M87 85.8 H100" stroke="#3b3b3b" stroke-width="1.3"/></svg>
<svg style="left:480px;top:100px;" width="24" height="24" viewBox="0 0 24 24"><path d="M115.8 70.8 H135" stroke="#3b3b3b" stroke-width="1.3"/><path d="M127 75.8 H135" stroke="#3b3b3b" stroke-width="1.3"/><path d="M127 80.8 H135" stroke="#3b3b3b" stroke-width="1.3"/><path d="M115.8 85.8 H135" stroke="#3b3b3b" stroke-width="1.3"/></svg>
<svg style="left:595.4px;top:174.4px;" width="10" height="8" viewBox="0 0 10 8"><path d="M9 4 H1.4 M4.4 1 L1.2 4 L4.4 7" fill="none" stroke="#2f7ed8" stroke-width="1.3" stroke-linejoin="round"/></svg>
<svg style="left:480px;top:100px;" width="24" height="24" viewBox="0 0 24 24"><path d="M150.6 70.8 H170" stroke="#3b3b3b" stroke-width="1.3"/><path d="M162 75.8 H170" stroke="#3b3b3b" stroke-width="1.3"/><path d="M162 80.8 H170" stroke="#3b3b3b" stroke-width="1.3"/><path d="M150.6 85.8 H170" stroke="#3b3b3b" stroke-width="1.3"/></svg>
<svg style="left:630.4px;top:174.4px;" width="10" height="8" viewBox="0 0 10 8"><path d="M1 4 H8.6 M5.6 1 L8.8 4 L5.6 7" fill="none" stroke="#2f7ed8" stroke-width="1.3" stroke-linejoin="round"/></svg>
<div style="left:664px;top:118.8px;width:1.1px;height:82px;background:#d2d2d2;"></div>
<span class="t" style="top:125px;font-size:12.6px;color:#3b3b3b;left:681.39px;transform:scaleX(1.2020);transform-origin:0 50%;">ab</span>
<span class="t" style="top:135px;font-size:12.6px;color:#3b3b3b;left:681.65px;transform:scaleX(1.0947);transform-origin:0 50%;">c</span>
<svg style="left:689.6px;top:136.6px;" width="11.4" height="10.4" viewBox="0 0 11.4 10.4"><path d="M8.4 0.6 C11 2.6 10.6 6.4 6.4 6.4 H1.6 M4.6 3.2 L1.2 6.4 L4.6 9.6" fill="none" stroke="#2f7ed8" stroke-width="1.3" stroke-linejoin="round"/></svg>
<svg style="left:678.4px;top:167.6px;" width="21" height="21" viewBox="0 0 21 21"><path d="M0.7 0.7 H20 V5 H0.7 Z M0.7 15.6 H20 V20 H0.7 Z M7 0.7 V5 M13.6 0.7 V5 M7 15.6 V20 M13.6 15.6 V20" fill="none" stroke="#3d3d3d" stroke-width="1.2"/><rect x="0.7" y="5" width="19.3" height="10.6" fill="#d6e7fa" stroke="#2f7ed8" stroke-width="1.3"/><path d="M3.4 10.3 H17.4 M6 7.6 L3.2 10.3 L6 13 M14.8 7.6 L17.6 10.3 L14.8 13" fill="none" stroke="#2f7ed8" stroke-width="1.2" stroke-linejoin="round"/></svg>
<svg style="left:717px;top:176.1px;" width="8.6" height="5.4" viewBox="0 0 8.6 5.4"><path d="M1 1 L4.3 4.4 L7.6 1" fill="none" stroke="#3b3b3b" stroke-width="1.4" stroke-linecap="round" stroke-linejoin="round"/></svg>
<span class="t" style="top:217px;font-size:14.4px;color:#444;left:568.3px;transform:scaleX(0.9916);transform-origin:0 50%;">Alignment</span>
<svg style="left:732.4px;top:219.4px;" width="10.4" height="10.4" viewBox="0 0 10.4 10.4"><path d="M0.7 6.4 V0.7 H6.4" fill="none" stroke="#444" stroke-width="1.2"/><path d="M3.6 3.6 L9.4 9.4 M9.6 4.6 V9.6 H4.6" fill="none" stroke="#444" stroke-width="1.2"/></svg>
<div style="left:747px;top:111.5px;width:1.1px;height:117.3px;background:#d2d2d2;"></div>
<div style="left:759.2px;top:120.4px;width:193.4px;height:31px;background:#fff;border-radius:4.5px;border:1.2px solid #8c8c8c;"></div>
<span class="t" style="top:129px;font-size:15.4px;color:#2b2b2b;left:761.88px;transform:scaleX(0.9287);transform-origin:0 50%;">General</span>
<svg style="left:940.2px;top:134.5px;" width="8.6" height="5.4" viewBox="0 0 8.6 5.4"><path d="M1 1 L4.3 4.4 L7.6 1" fill="none" stroke="#3b3b3b" stroke-width="1.4" stroke-linecap="round" stroke-linejoin="round"/></svg>
<svg style="left:763.6px;top:171px;" width="22.6" height="19" viewBox="0 0 22.6 19"><rect x="0.7" y="1.4" width="20" height="11.6" fill="#fff" stroke="#3d3d3d" stroke-width="1.3"/><path d="M6.6 4.4 C4.4 4.4 3.6 5.8 3.6 7.2 C3.6 8.6 4.4 10 6.6 10 M10.6 4.4 C8.4 4.4 7.6 5.8 7.6 7.2 C7.6 8.6 8.4 10 10.6 10" fill="none" stroke="#3d3d3d" stroke-width="1.1"/><path d="M11.6 9.6 V15.8 C11.6 17.4 13.8 18.2 16.6 18.2 C19.4 18.2 21.6 17.4 21.6 15.8 V9.6" fill="#fdebd3" stroke="#e08a32" stroke-width="1.2"/><ellipse cx="16.6" cy="9.6" rx="5" ry="2.2" fill="#fdebd3" stroke="#e08a32" stroke-width="1.2"/><path d="M11.6 12.8 C11.6 14.2 13.8 15 16.6 15 C19.4 15 21.6 14.2 21.6 12.8" fill="none" stroke="#e08a32" stroke-width="1.1"/></svg>
<svg style="left:795.7px;top:176.1px;" width="8.6" height="5.4" viewBox="0 0 8.6 5.4"><path d="M1 1 L4.3 4.4 L7.6 1" fill="none" stroke="#3b3b3b" stroke-width="1.4" stroke-linecap="round" stroke-linejoin="round"/></svg>
<span class="t" style="top:169px;font-size:22.4px;color:#3b3b3b;left:818.45px;transform:scaleX(1.0889);transform-origin:0 50%;">%</span>
<svg style="left:859.6px;top:170.6px;" width="10.4" height="17" viewBox="0 0 10.4 17"><path d="M5 0.8 C7.6 0.8 9.6 2.8 9.6 6.2 C9.6 10.6 6.6 14.6 2 16.2 L1.6 15.2 C4.6 13.6 6 11.4 6 9.4 C3.4 9.8 1 8 1 5.2 C1 2.6 2.8 0.8 5 0.8 Z" fill="#333"/></svg>
<div style="left:882.8px;top:163.4px;width:1.1px;height:31.6px;background:#d2d2d2;"></div>
<svg style="left:891.6px;top:167.4px;" width="21.4" height="22" viewBox="0 0 21.4 22"><path d="M9.6 6 H1.6 M4.6 2.8 L1.4 6 L4.6 9.2" fill="none" stroke="#2f7ed8" stroke-width="1.3" stroke-linejoin="round"/></svg>
<span class="t" style="top:168px;font-size:12.2px;color:#3b3b3b;left:905.73px;transform:scaleX(0.9563);transform-origin:0 50%;">0</span>
<span class="t" style="top:178px;font-size:12.2px;color:#3b3b3b;left:894px;transform:scaleX(1.0886);transform-origin:0 50%;">.00</span>
<svg style="left:926.4px;top:167.4px;" width="21.4" height="22" viewBox="0 0 21.4 22"><path d="M1 16.8 H9.4 M6.4 13.6 L9.6 16.8 L6.4 20" fill="none" stroke="#2f7ed8" stroke-width="1.3" stroke-linejoin="round"/></svg>
<span class="t" style="top:168px;font-size:12.2px;color:#3b3b3b;left:929.2px;transform:scaleX(1.0886);transform-origin:0 50%;">.00</span>
<span class="t" style="top:178px;font-size:12.2px;color:#3b3b3b;left:936.18px;transform:scaleX(1.1083);transform-origin:0 50%;">.0</span>
<span class="t" style="top:217px;font-size:14.4px;color:#444;left:818.84px;">Number</span>
<svg style="left:948.2px;top:219.4px;" width="10.4" height="10.4" viewBox="0 0 10.4 10.4"><path d="M0.7 6.4 V0.7 H6.4" fill="none" stroke="#444" stroke-width="1.2"/><path d="M3.6 3.6 L9.4 9.4 M9.6 4.6 V9.6 H4.6" fill="none" stroke="#444" stroke-width="1.2"/></svg>
<div style="left:962.8px;top:111.5px;width:1.1px;height:117.3px;background:#d2d2d2;"></div>
</section>
<section class="g" aria-label="ribbon commands">
<svg style="left:1006px;top:120.2px;" width="37.6" height="29.4" viewBox="0 0 37.6 29.4"><rect x="0.7" y="0.7" width="36" height="28" fill="#fff" stroke="#4a4a4a" stroke-width="1.3"/><rect x="7.4" y="1.4" width="15.6" height="8.6" fill="#e8737a"/><rect x="7.4" y="10.4" width="10" height="8.4" fill="#5f93d8"/><rect x="7.4" y="19.2" width="18.4" height="8.8" fill="#e8737a"/><path d="M7 0.7 V28.7 M30.4 0.7 V28.7 M0.7 10 H36.7 M0.7 19 H36.7" fill="none" stroke="#4a4a4a" stroke-width="1.1"/></svg>
<span class="t" style="top:163px;font-size:15.4px;color:#2b2b2b;left:983.47px;transform:scaleX(1.0794);transform-origin:0 50%;">Conditional</span>
<span class="t" style="top:184px;font-size:15.4px;color:#2b2b2b;left:977.47px;transform:scaleX(1.0759);transform-origin:0 50%;">Formatting</span>
<svg style="left:1061.2px;top:189.5px;" width="8.6" height="5.4" viewBox="0 0 8.6 5.4"><path d="M1 1 L4.3 4.4 L7.6 1" fill="none" stroke="#3b3b3b" stroke-width="1.4" stroke-linecap="round" stroke-linejoin="round"/></svg>
<svg style="left:1097.2px;top:120.2px;" width="42" height="36" viewBox="0 0 42 36"><rect x="0.7" y="0.7" width="36.6" height="27.6" fill="#fff" stroke="#4a4a4a" stroke-width="1.3"/><rect x="12.6" y="10" width="24.4" height="18" fill="#8db7ec"/><path d="M12.4 0.7 V28.3 M24.6 0.7 V28.3 M0.7 9.8 H37.3 M0.7 19 H37.3" fill="none" stroke="#4a4a4a" stroke-width="1.1"/><g transform="translate(11.4 12.6)"><path d="M13.4 12.6 L22.6 1.6 C23.6 0.4 25.4 0.4 26.2 1.4 C27 2.4 26.8 3.8 25.8 4.8 L15.4 14.6 Z" fill="#fff" stroke="#3d3d3d" stroke-width="1.2" stroke-linejoin="round"/><path d="M12.6 13 C14.4 12.6 15.6 13.8 15.4 15.6 C15 19.4 9.6 22.4 0.8 21.2 C4.6 20 5.4 18.4 6.4 16.4 C7.6 14 10 12.8 12.6 13 Z" fill="#5b9bdf" stroke="#2f7ed8" stroke-width="1.1" stroke-linejoin="round"/></g></svg>
<span class="t" style="top:163px;font-size:15.4px;color:#2b2b2b;left:1080.75px;transform:scaleX(1.0144);transform-origin:0 50%;">Format as</span>
<span class="t" style="top:184px;font-size:15.4px;color:#2b2b2b;left:1090.5px;transform:scaleX(0.9887);transform-origin:0 50%;">Table</span>
<svg style="left:1131.5px;top:189.5px;" width="8.6" height="5.4" viewBox="0 0 8.6 5.4"><path d="M1 1 L4.3 4.4 L7.6 1" fill="none" stroke="#3b3b3b" stroke-width="1.4" stroke-linecap="round" stroke-linejoin="round"/></svg>
<svg style="left:1169.8px;top:120.2px;" width="42" height="36" viewBox="0 0 42 36"><rect x="0.7" y="0.7" width="36.6" height="27.6" fill="#fff" stroke="#4a4a4a" stroke-width="1.3"/><rect x="7.6" y="6.4" width="23.4" height="16.4" fill="#8db7ec" stroke="#2f7ed8" stroke-width="1.2"/><path d="M7.6 0.7 V28.3 M31 0.7 V6 M0.7 6.4 H37.3 M0.7 22.8 H37.3" fill="none" stroke="#4a4a4a" stroke-width="1.1"/><g transform="translate(12 12.6)"><path d="M13.4 12.6 L22.6 1.6 C23.6 0.4 25.4 0.4 26.2 1.4 C27 2.4 26.8 3.8 25.8 4.8 L15.4 14.6 Z" fill="#fff" stroke="#3d3d3d" stroke-width="1.2" stroke-linejoin="round"/><path d="M12.6 13 C14.4 12.6 15.6 13.8 15.4 15.6 C15 19.4 9.6 22.4 0.8 21.2 C4.6 20 5.4 18.4 6.4 16.4 C7.6 14 10 12.8 12.6 13 Z" fill="#5b9bdf" stroke="#2f7ed8" stroke-width="1.1" stroke-linejoin="round"/></g></svg>
<span class="t" style="top:163px;font-size:15.4px;color:#2b2b2b;left:1174.99px;transform:scaleX(1.0519);transform-origin:0 50%;">Cell</span>
<span class="t" style="top:184px;font-size:15.4px;color:#2b2b2b;left:1160.62px;transform:scaleX(0.9820);transform-origin:0 50%;">Styles</span>
<svg style="left:1206.2px;top:189.5px;" width="8.6" height="5.4" viewBox="0 0 8.6 5.4"><path d="M1 1 L4.3 4.4 L7.6 1" fill="none" stroke="#3b3b3b" stroke-width="1.4" stroke-linecap="round" stroke-linejoin="round"/></svg>
<span class="t" style="top:217px;font-size:14.4px;color:#444;left:1079.92px;transform:scaleX(0.8874);transform-origin:0 50%;">Styles</span>
<div style="left:1230.3px;top:111.5px;width:1.1px;height:117.3px;background:#d2d2d2;"></div>
<svg style="left:1246.8px;top:116.2px;" width="22.4" height="18.4" viewBox="0 0 22.4 18.4"><path d="M0.7 0.7 H21.4 V17.4 H0.7 Z M0.7 5 H21.4 M0.7 13 H21.4 M7.6 0.7 V17.4 M14.6 0.7 V17.4" fill="none" stroke="#4a4a4a" stroke-width="1.2"/><rect x="7.6" y="5" width="13.8" height="8" fill="#8db7ec" stroke="#2f7ed8" stroke-width="1.2"/><rect x="0" y="5.6" width="8" height="7" fill="#fff"/><path d="M9.4 9 H1.2 M4 6.2 L1.2 9 L4 11.8" fill="none" stroke="#2f7ed8" stroke-width="1.3" stroke-linejoin="round"/></svg>
<span class="t" style="top:119px;font-size:15.4px;color:#2b2b2b;left:1273.06px;transform:scaleX(1.0395);transform-origin:0 50%;">Insert</span>
<svg style="left:1337.5px;top:123.5px;" width="8.6" height="5.4" viewBox="0 0 8.6 5.4"><path d="M1 1 L4.3 4.4 L7.6 1" fill="none" stroke="#3b3b3b" stroke-width="1.4" stroke-linecap="round" stroke-linejoin="round"/></svg>
<svg style="left:1246.8px;top:151px;" width="22.4" height="18.4" viewBox="0 0 22.4 18.4"><path d="M0.7 0.7 H21.4 V17.4 H0.7 Z M0.7 5 H21.4 M0.7 13 H21.4 M7.6 0.7 V17.4 M14.6 0.7 V17.4" fill="none" stroke="#4a4a4a" stroke-width="1.2"/><rect x="5" y="5" width="8" height="8" fill="#8db7ec" stroke="#2f7ed8" stroke-width="1.2"/><rect x="13.4" y="4" width="9" height="10" fill="#fff"/><path d="M14.4 5.4 L21.4 12.6 M21.4 5.4 L14.4 12.6" fill="none" stroke="#e03a3a" stroke-width="1.4"/></svg>
<span class="t" style="top:154px;font-size:15.4px;color:#2b2b2b;left:1273.18px;transform:scaleX(1.0686);transform-origin:0 50%;">Delete</span>
<svg style="left:1345px;top:157.9px;" width="8.6" height="5.4" viewBox="0 0 8.6 5.4"><path d="M1 1 L4.3 4.4 L7.6 1" fill="none" stroke="#3b3b3b" stroke-width="1.4" stroke-linecap="round" stroke-linejoin="round"/></svg>
<svg style="left:1246.8px;top:184px;" width="22.4" height="21.4" viewBox="0 0 22.4 21.4"><path d="M3 2.2 H19 M3 0.4 V4 M19 0.4 V4" fill="none" stroke="#2f7ed8" stroke-width="1.2"/><path d="M0.7 6 H21.4 V20.6 H0.7 Z M0.7 9.6 H21.4 M0.7 17 H21.4 M5 6 V20.6 M17 6 V20.6" fill="none" stroke="#4a4a4a" stroke-width="1.2"/><rect x="5" y="9.6" width="12" height="7.4" fill="#8db7ec" stroke="#2f7ed8" stroke-width="1.2"/></svg>
<span class="t" style="top:188px;font-size:15.4px;color:#2b2b2b;left:1273.22px;transform:scaleX(1.0373);transform-origin:0 50%;">Format</span>
<svg style="left:1329px;top:192.9px;" width="8.6" height="5.4" viewBox="0 0 8.6 5.4"><path d="M1 1 L4.3 4.4 L7.6 1" fill="none" stroke="#3b3b3b" stroke-width="1.4" stroke-linecap="round" stroke-linejoin="round"/></svg>
<span class="t" style="top:217px;font-size:14.4px;color:#444;left:1288.15px;transform:scaleX(0.9086);transform-origin:0 50%;">Cells</span>
<div style="left:1375px;top:111.5px;width:1.1px;height:117.3px;background:#d2d2d2;"></div>
<svg style="left:1394.6px;top:116px;" width="17.4" height="19.6" viewBox="0 0 17.4 19.6"><path d="M15.6 4.4 V1 H1.4 L9.2 9.8 L1.4 18.6 H15.6 V15.2" fill="none" stroke="#333" stroke-width="1.4" stroke-linejoin="round"/></svg>
<svg style="left:1430px;top:123.5px;" width="8.6" height="5.4" viewBox="0 0 8.6 5.4"><path d="M1 1 L4.3 4.4 L7.6 1" fill="none" stroke="#3b3b3b" stroke-width="1.4" stroke-linecap="round" stroke-linejoin="round"/></svg>
<svg style="left:1391.6px;top:150.6px;" width="22" height="18.6" viewBox="0 0 22 18.6"><rect x="0.7" y="0.7" width="20.4" height="17" fill="#fff" stroke="#3d3d3d" stroke-width="1.3"/><path d="M0.7 3.6 H21" stroke="#3d3d3d" stroke-width="1.2"/><path d="M10.9 6 V14.6 M7.6 11.4 L10.9 14.8 L14.2 11.4" fill="none" stroke="#2f7ed8" stroke-width="1.3" stroke-linejoin="round"/></svg>
<svg style="left:1420.7px;top:157.9px;" width="8.6" height="5.4" viewBox="0 0 8.6 5.4"><path d="M1 1 L4.3 4.4 L7.6 1" fill="none" stroke="#3b3b3b" stroke-width="1.4" stroke-linecap="round" stroke-linejoin="round"/></svg>
<svg style="left:1392px;top:184.6px;" width="21" height="20.4" viewBox="0 0 21 20.4"><path d="M12.6 1 L19.6 8 L9 18.8 H5.8 L1.4 14.4 C0.8 13.6 0.8 13 1.4 12.4 Z" fill="#fff" stroke="#9b3fb5" stroke-width="1.3" stroke-linejoin="round"/><path d="M5.4 8.6 L12.4 15.6 L9 18.8 H5.8 L1.4 14.4 C0.8 13.6 0.8 13 1.4 12.4 Z" fill="#c78ad8" stroke="#9b3fb5" stroke-width="1.2" stroke-linejoin="round"/></svg>
<svg style="left:1420.7px;top:192.5px;" width="8.6" height="5.4" viewBox="0 0 8.6 5.4"><path d="M1 1 L4.3 4.4 L7.6 1" fill="none" stroke="#3b3b3b" stroke-width="1.4" stroke-linecap="round" stroke-linejoin="round"/></svg>
<span class="t" style="top:115px;font-size:21.6px;color:#2f7ed8;left:1463.4px;transform:scaleX(0.8911);transform-origin:0 50%;">A</span>
<span class="t" style="top:135px;font-size:20.6px;color:#333;left:1462.76px;transform:scaleX(1.0415);transform-origin:0 50%;">Z</span>
<svg style="left:1479px;top:124.6px;" width="23" height="23" viewBox="0 0 23 23"><path d="M1 1.2 H21.6 L14 10 V21.4 H8.6 V10 Z" fill="none" stroke="#333" stroke-width="1.4" stroke-linejoin="round"/></svg>
<span class="t" style="top:163px;font-size:15.4px;color:#2b2b2b;left:1458.74px;transform:scaleX(1.1002);transform-origin:0 50%;">Sort &amp;</span>
<span class="t" style="top:184px;font-size:15.4px;color:#2b2b2b;left:1455.68px;transform:scaleX(1.0695);transform-origin:0 50%;">Filter</span>
<svg style="left:1497px;top:189.5px;" width="8.6" height="5.4" viewBox="0 0 8.6 5.4"><path d="M1 1 L4.3 4.4 L7.6 1" fill="none" stroke="#3b3b3b" stroke-width="1.4" stroke-linecap="round" stroke-linejoin="round"/></svg>
<svg style="left:1526px;top:115.6px;" width="40" height="40" viewBox="0 0 40 40"><circle cx="25" cy="15" r="13.6" fill="none" stroke="#333" stroke-width="1.4"/><path d="M15.4 24.8 L1.4 38.6" stroke="#333" stroke-width="1.5" stroke-linecap="round"/></svg>
<span class="t" style="top:163px;font-size:15.4px;color:#2b2b2b;left:1521.64px;transform:scaleX(1.1035);transform-origin:0 50%;">Find &amp;</span>
<span class="t" style="top:184px;font-size:15.4px;color:#2b2b2b;left:1516.8px;transform:scaleX(1.0127);transform-origin:0 50%;">Select</span>
<svg style="left:1565.2px;top:189.5px;" width="8.6" height="5.4" viewBox="0 0 8.6 5.4"><path d="M1 1 L4.3 4.4 L7.6 1" fill="none" stroke="#3b3b3b" stroke-width="1.4" stroke-linecap="round" stroke-linejoin="round"/></svg>
<span class="t" style="top:217px;font-size:14.4px;color:#444;left:1460.65px;">Editing</span>
<div style="left:1589px;top:111.5px;width:1.1px;height:117.3px;background:#d2d2d2;"></div>
<svg style="left:1613px;top:116px;" width="38" height="38" viewBox="0 0 38 38"><rect x="0.8" y="0.8" width="36.2" height="36.2" fill="#fff" stroke="#c8603a" stroke-width="1.5"/><rect x="4.6" y="4.6" width="12.2" height="12.2" fill="none" stroke="#c8603a" stroke-width="1.3"/><rect x="21" y="4.6" width="12.2" height="12.2" fill="none" stroke="#c8603a" stroke-width="1.3"/><rect x="4.6" y="21" width="12.2" height="12.2" fill="none" stroke="#c8603a" stroke-width="1.3"/><rect x="21" y="21" width="12.2" height="12.2" fill="none" stroke="#c8603a" stroke-width="1.3"/></svg>
<span class="t" style="top:163px;font-size:15.4px;color:#2b2b2b;left:1604.3px;transform:scaleX(1.0684);transform-origin:0 50%;">Add-ins</span>
<span class="t" style="top:217px;font-size:14.4px;color:#444;left:1607.5px;transform:scaleX(0.9832);transform-origin:0 50%;">Add-ins</span>
<div style="left:1672.8px;top:111.5px;width:1.1px;height:117.3px;background:#d2d2d2;"></div>
<svg style="left:1694px;top:116px;" width="40" height="37" viewBox="0 0 40 37"><defs><linearGradient id="cpa" x1="0" y1="0" x2="1" y2="1"><stop offset="0" stop-color="#2a7de1"/><stop offset="0.5" stop-color="#3aa0e8"/><stop offset="1" stop-color="#6fcf6a"/></linearGradient><linearGradient id="cpb" x1="0" y1="0" x2="1" y2="1"><stop offset="0" stop-color="#b455e8"/><stop offset="0.6" stop-color="#e8609a"/><stop offset="1" stop-color="#f0703c"/></linearGradient><linearGradient id="cpc" x1="0" y1="0" x2="0" y2="1"><stop offset="0" stop-color="#3b8fe8"/><stop offset="0.45" stop-color="#58c66a"/><stop offset="1" stop-color="#f2c23a"/></linearGradient></defs><path d="M13 0.8 H24.6 C27.4 0.8 29 2.4 29.8 5 L31.2 10 H22.6 C19.6 10 18.2 11.6 17.4 14.4 L14.4 25.6 C13.6 28.4 11.8 30 9 30 H5 C1.6 30 0 27.4 1 24 L6 6.6 C7.2 2.6 9.6 0.8 13 0.8 Z" fill="url(#cpc)"/><path d="M20 0.8 H25 C28 0.8 29.6 2.6 30.4 5.2 L31.6 9.6 H24 C21.4 9.6 19.8 10.8 19 13.2 C19.6 8.4 19.6 3.4 16.6 0.8 Z" fill="#2a6fd6"/><path d="M27 36 H15.4 C12.6 36 11 34.4 10.2 31.8 L8.8 26.8 H17.4 C20.4 26.8 21.8 25.2 22.6 22.4 L25.6 11.2 C26.4 8.4 28.2 6.8 31 6.8 H35 C38.4 6.8 40 9.4 39 12.8 L34 30.2 C32.8 34.2 30.4 36 27 36 Z" fill="url(#cpb)"/><path d="M20 36 H15 C12 36 10.4 34.2 9.6 31.6 L8.4 27.2 H16 C18.6 27.2 20.2 26 21 23.6 C20.4 28.4 20.4 33.4 23.4 36 Z" fill="#e8703a"/></svg>
<span class="t" style="top:163px;font-size:15.4px;color:#2b2b2b;left:1687.16px;transform:scaleX(1.0883);transform-origin:0 50%;">Copilot</span>
<div style="left:1752.8px;top:111.5px;width:1.1px;height:117.3px;background:#d2d2d2;"></div>
<svg style="left:1883.2px;top:215.6px;" width="13.6" height="7.6" viewBox="0 0 13.6 7.6"><path d="M1 1 L6.8 6.6 L12.6 1" fill="none" stroke="#3b3b3b" stroke-width="1.5" stroke-linecap="round" stroke-linejoin="round"/></svg>
</section>
<div class="g" aria-label="vertical scrollbar">
<div style="left:1895.2px;top:240px;width:24.8px;height:889px;background:#f5f5f8;border-radius:10px 0 0 10px / 10px 0 0 12px;"></div>
<svg style="left:1901.4px;top:244.2px;" width="12" height="9" viewBox="0 0 12 9"><path d="M6 0.8 L11.4 8 H0.6 Z" fill="#666" stroke="#666" stroke-width="0.8" stroke-linejoin="round"/></svg>
<div style="left:1902px;top:260.2px;width:10.8px;height:553.2px;background:#6f6f6f;border-radius:5.4px;"></div>
<svg style="left:1901.4px;top:1112.8px;" width="12" height="9" viewBox="0 0 12 9"><path d="M6 8.2 L11.4 1 H0.6 Z" fill="#666" stroke="#666" stroke-width="0.8" stroke-linejoin="round"/></svg>
</div>
<footer class="g" aria-label="sheet tabs and status">
<div style="left:0px;top:1127.6px;width:1920px;height:42px;background:#e8ebee;background:linear-gradient(#e4e6ec 0,#e8ebee 7px,#e9ecee 100%);"></div>
<div style="left:0px;top:1169px;width:1920px;height:31px;background:#f4f4f4;"></div>
<svg style="left:26.6px;top:1141px;" width="10" height="14" viewBox="0 0 10 14"><path d="M8 1.2 L2 7 L8 12.8" fill="none" stroke="#8b8b8b" stroke-width="1.4" stroke-linecap="round" stroke-linejoin="round"/></svg>
<svg style="left:70.4px;top:1141px;" width="10" height="14" viewBox="0 0 10 14"><path d="M2 1.2 L8 7 L2 12.8" fill="none" stroke="#8b8b8b" stroke-width="1.4" stroke-linecap="round" stroke-linejoin="round"/></svg>
<div style="left:144.2px;top:1133px;width:160.8px;height:31.4px;background:#5b538b;border-radius:5px;box-shadow:0 0 0 0.6px #4d467a;"></div>
<span class="t" style="top:1140px;font-size:19.4px;color:#fff;left:155.99px;transform:scaleX(0.9259);transform-origin:0 50%;">Sales Dashboard</span>
<div style="left:310.8px;top:1137px;width:1px;height:24px;background:#d3d5db;"></div>
<div style="left:317.5px;top:1133px;width:193px;height:31.4px;background:#5b538b;border-radius:5px;box-shadow:0 0 0 0.6px #4d467a;"></div>
<span class="t" style="top:1140px;font-size:19.4px;color:#fff;left:329.72px;transform:scaleX(0.9562);transform-origin:0 50%;">Products Dashboard</span>
<div style="left:516.6px;top:1137px;width:1px;height:24px;background:#d3d5db;"></div>
<div style="left:523.6px;top:1128.6px;width:206.6px;height:34.6px;background:#fff;border-radius:4px;background:linear-gradient(#fbfbfd 0,#f4f3f9 35%,#d4d1e4 100%);box-shadow:0 0 0 1px #eeeef3,0 1px 2px rgba(0,0,0,0.22);"></div>
<span class="t" style="top:1137px;font-size:18.8px;color:#1c1c1c;font-weight:700;left:532.6px;transform:scaleX(0.9346);transform-origin:0 50%;">Customers Dashboard</span>
<div style="left:533px;top:1158.2px;width:187.2px;height:2.4px;background:#1f7244;border-radius:1px;"></div>
<div style="left:736.6px;top:1137px;width:1px;height:24px;background:#d3d5db;"></div>
<div style="left:743.2px;top:1133px;width:209.4px;height:31.4px;background:#5b538b;border-radius:5px;box-shadow:0 0 0 0.6px #4d467a;"></div>
<span class="t" style="top:1140px;font-size:19.4px;color:#fff;left:755.53px;transform:scaleX(0.9441);transform-origin:0 50%;">Employees Dashboard</span>
<svg style="left:1015px;top:1140.6px;" width="15" height="15" viewBox="0 0 15 15"><path d="M7.5 0.6 V14.4 M0.6 7.5 H14.4" stroke="#333" stroke-width="1.3"/></svg>
<div style="left:1510.4px;top:1142.4px;width:2.8px;height:2.8px;background:#444;border-radius:1.4px;"></div>
<div style="left:1510.4px;top:1147.4px;width:2.8px;height:2.8px;background:#444;border-radius:1.4px;"></div>
<div style="left:1510.4px;top:1152.4px;width:2.8px;height:2.8px;background:#444;border-radius:1.4px;"></div>
<div style="left:1533.6px;top:1137.8px;width:362.6px;height:21px;background:#f4f5f8;border-radius:10.5px;"></div>
<svg style="left:1540px;top:1143px;" width="9" height="11" viewBox="0 0 9 11"><path d="M0.6 5.5 L8.6 0.6 V10.4 Z" fill="#5e5e5e"/></svg>
<svg style="left:1880.4px;top:1143px;" width="9" height="11" viewBox="0 0 9 11"><path d="M8.4 5.5 L0.4 0.6 V10.4 Z" fill="#5e5e5e"/></svg>
<div style="left:1555.8px;top:1143.2px;width:271.6px;height:10px;background:#6f6f6f;border-radius:5px;"></div>
<span class="t" style="top:1179px;font-size:14.4px;color:#3a3a3a;left:14.58px;transform:scaleX(0.8897);transform-origin:0 50%;">Ready</span>
<svg style="left:78.4px;top:1175.6px;" width="19.4" height="20" viewBox="0 0 19.4 20"><circle cx="7.4" cy="3.6" r="2.5" fill="none" stroke="#333" stroke-width="1.2"/><path d="M1 7 C4 8.2 5.6 8.4 7.4 8.4 C9.2 8.4 10.8 8.2 13.8 7 L14.2 8.4 C12 9.6 10.6 10 10 10.4 L10.6 14 M4.8 10.4 C4.2 10 2.8 9.6 0.6 8.4 L1 7 M4.8 10.4 L3 18.6 L4.6 19 L7.4 13.4 L8.6 15.6" fill="none" stroke="#333" stroke-width="1.2" stroke-linejoin="round"/><path d="M11.4 12.6 L18.4 19.4 M18.4 12.6 L11.4 19.4" stroke="#333" stroke-width="1.3"/></svg>
<span class="t" style="top:1179px;font-size:14.2px;color:#1f1f1f;font-weight:700;left:102.27px;transform:scaleX(0.9417);transform-origin:0 50%;">Accessibility: Investigate</span>
<div style="left:1523px;top:1171px;width:52.8px;height:29px;background:#dcdcdc;"></div>
<svg style="left:1540px;top:1176px;" width="18" height="18" viewBox="0 0 18 18"><path d="M0.8 0.8 H16.4 V16.4 H0.8 Z M6 0.8 V16.4 M11.2 0.8 V16.4 M0.8 6 H16.4 M0.8 11.2 H16.4" fill="none" stroke="#2b2b2b" stroke-width="1.3"/></svg>
<svg style="left:1593px;top:1176px;" width="19.4" height="18" viewBox="0 0 19.4 18"><rect x="0.8" y="0.8" width="17.4" height="16" fill="none" stroke="#2b2b2b" stroke-width="1.3"/><rect x="4.6" y="4" width="9.8" height="9.6" fill="none" stroke="#2b2b2b" stroke-width="1.2"/><path d="M7 7 H12 M7 9.2 H12 M7 11.2 H12" stroke="#2b2b2b" stroke-width="1"/></svg>
<svg style="left:1646.6px;top:1176px;" width="19" height="18" viewBox="0 0 19 18"><rect x="0.8" y="0.8" width="17" height="16" fill="none" stroke="#2b2b2b" stroke-width="1.3"/><path d="M5.6 0.8 V8 H13 V0.8 M9.2 0.8 V8 M0.8 8 H5.6" fill="none" stroke="#2b2b2b" stroke-width="1.2"/></svg>
<div style="left:1690.8px;top:1184.4px;width:10px;height:1.2px;background:#8a8a8a;"></div>
<div style="left:1708.8px;top:1184.5px;width:132px;height:1px;background:#5c5c5c;"></div>
<div style="left:1771.2px;top:1178px;width:6.6px;height:14.6px;background:#6a6a6a;border-radius:1px;"></div>
<svg style="left:1848px;top:1180px;" width="10" height="10" viewBox="0 0 10 10"><path d="M5 0.4 V9.6 M0.4 5 H9.6" stroke="#6a6a6a" stroke-width="1.1"/></svg>
<span class="t" style="top:1179px;font-size:14.2px;color:#2b2b2b;left:1875.23px;transform:scaleX(0.9141);transform-origin:0 50%;">100%</span>
</footer>
<div class="g" aria-hidden="true">
<span class="t" style="top:1087px;font-size:25px;color:rgba(100,100,100,0.5);left:1536.3px;transform:scaleX(1.0623);transform-origin:0 50%;">Activate Windows</span>
<span class="t" style="top:1122px;font-size:18.4px;color:rgba(100,100,100,0.42);left:1535.34px;transform:scaleX(1.0466);transform-origin:0 50%;">Go to Settings to activate Windows.</span>
<span class="t" lang="ar" dir="rtl" style="left:849.6px;top:1085px;font-family:'DejaVu Sans',sans-serif;font-weight:700;font-size:73px;color:rgba(222,222,224,0.8);">نفذلي</span>
<span class="t" style="top:1163px;font-size:35.4px;color:rgba(222,222,224,0.8);font-weight:700;left:860.19px;">nafezly.com</span>
</div>
</div>
</body>
</html>
